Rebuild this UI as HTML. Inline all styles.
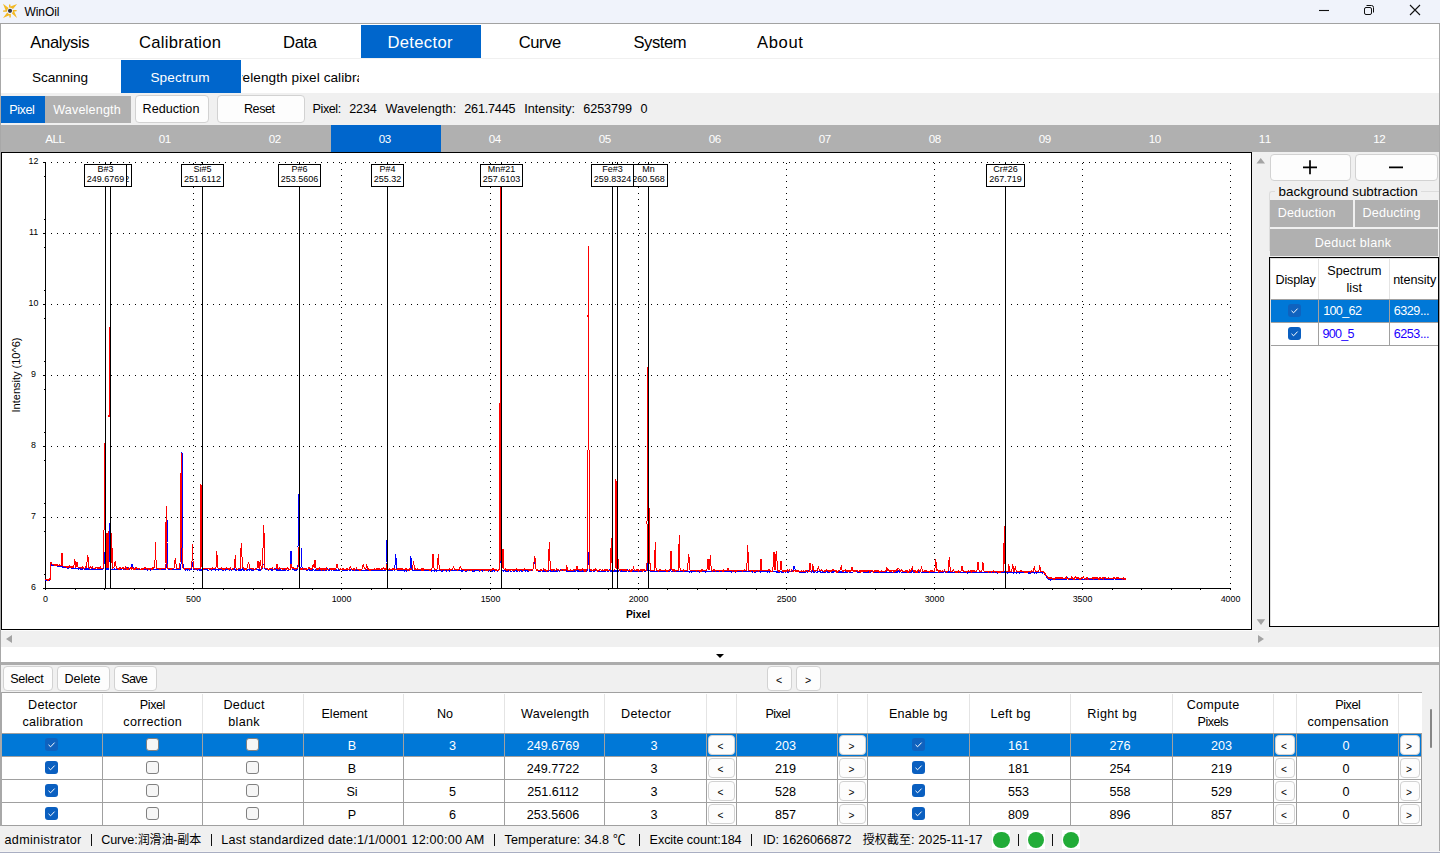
<!DOCTYPE html>
<html lang="en"><head><meta charset="utf-8"><title>WinOil</title>
<style>
*{box-sizing:border-box;margin:0;padding:0}
html,body{width:1440px;height:853px;overflow:hidden;background:#f0f0f0;font-family:"Liberation Sans","Noto Sans CJK SC",sans-serif;font-size:12.6px;color:#000}
.a{position:absolute}
.t{position:absolute;white-space:pre;line-height:16px;height:16px}
.c{position:absolute;display:flex;align-items:center;justify-content:center;white-space:nowrap;text-align:center}
.btn{position:absolute;display:flex;align-items:center;justify-content:center;background:#fdfdfd;border:1px solid #d2d2d2;border-radius:4px;white-space:nowrap}
.m{font-size:16.6px}
.s{font-size:13.6px}
.w{color:#fff}
.chart{position:absolute;left:2px;top:153px}
.ub{position:absolute;width:13px;height:13px;border-radius:3px;background:#f6f6f6;border:1px solid #808080}
.vl{position:absolute;width:1px;background:#a0a0a0}
.hl{position:absolute;height:1px;background:#a0a0a0}
</style></head>
<body>
<div class="a" style="left:0;top:0;width:1440px;height:24px;background:#f0f3fb"></div>
<div class="a" style="left:0;top:23px;width:1440px;height:1px;background:#a2a2a2"></div>
<svg class="a" style="left:0;top:0" width="22" height="22" viewBox="0 0 22 22"><g fill="#f2b824"><path d="M17.1 3.9L13 9L11.3 7.9L9 7.6L9 4.4L10.4 4.4L10.5 6.6Z"/><path d="M17 17.9L11.9 13.6L12.9 11.4L13 10L16.6 10L16.6 11.3L14.2 11.5Z"/><path d="M3 17.9L7.2 12.6L8.8 13.9L10.8 14L10.8 17.4L9.4 17.4L9.3 15.2Z"/><path d="M3 3.8L8.6 8L7.2 10L6.9 11.8L3.1 11.8L3.1 10.4L5.6 10.2Z"/></g><circle cx="10" cy="10.8" r="2.1" fill="#3b3b42"/></svg>
<div class="t " style="left:24.4px;top:3.5px;font-size:12px"><span style="letter-spacing:-0.049px;margin-right:0.049px">WinOil</span></div>
<svg class="a" style="left:1310px;top:0" width="120" height="22" viewBox="1310 0 120 22" fill="none" stroke="#111" stroke-width="1.1"><path d="M1319 10.5H1329"/><rect x="1364.5" y="7.5" width="7" height="7" rx="1.5" stroke-width="1"/><path d="M1366.5 5.5H1371.5a2 2 0 0 1 2 2V12.5" stroke-width="1"/><path d="M1410 5L1420 15M1420 5L1410 15"/></svg>
<div class="a" style="left:1px;top:24px;width:1438px;height:69px;background:#fff"></div>
<div class="a" style="left:1px;top:58px;width:1438px;height:1px;background:#f0f0f0"></div>
<div class="c m" style="left:0px;top:26px;width:120px;height:33px"><span style="letter-spacing:-0.357px;margin-right:0.357px">Analysis</span></div>
<div class="c m" style="left:120px;top:26px;width:120px;height:33px"><span style="letter-spacing:0.267px;margin-right:-0.267px">Calibration</span></div>
<div class="c m" style="left:240px;top:26px;width:120px;height:33px"><span style="letter-spacing:-0.354px;margin-right:0.354px">Data</span></div>
<div class="a" style="left:361px;top:25px;width:120px;height:33px;background:#0066cc"></div>
<div class="c m w" style="left:360px;top:26px;width:120px;height:33px"><span style="letter-spacing:0.326px;margin-right:-0.326px">Detector</span></div>
<div class="c m" style="left:480px;top:26px;width:120px;height:33px"><span style="letter-spacing:-0.441px;margin-right:0.441px">Curve</span></div>
<div class="c m" style="left:600px;top:26px;width:120px;height:33px"><span style="letter-spacing:-0.466px;margin-right:0.466px">System</span></div>
<div class="c m" style="left:720px;top:26px;width:120px;height:33px"><span style="letter-spacing:0.656px;margin-right:-0.656px">About</span></div>
<div class="c s" style="left:0;top:61px;width:120px;height:33px"><span style="letter-spacing:-0.113px;margin-right:0.113px">Scanning</span></div>
<div class="a" style="left:121px;top:60px;width:120px;height:33px;background:#0066cc"></div>
<div class="c s w" style="left:120px;top:61px;width:120px;height:33px"><span style="letter-spacing:0.147px;margin-right:-0.147px">Spectrum</span></div>
<div class="a s" style="left:242px;top:61px;width:117px;height:33px;overflow:hidden"><div class="c s" style="left:-41px;top:0;width:200px;height:33px"><span style="letter-spacing:0.064px;margin-right:-0.064px">Wavelength pixel calibration</span></div></div>
<div class="c w" style="left:1px;top:96px;width:44px;height:27px;background:#0066cc;padding-right:2px"><span style="letter-spacing:-0.449px;margin-right:0.449px">Pixel</span></div>
<div class="c w" style="left:45px;top:96px;width:86px;height:27px;background:#b0b0b0;padding-right:2px"><span style="letter-spacing:0.150px;margin-right:-0.150px">Wavelength</span></div>
<div class="btn" style="left:135px;top:95px;width:74px;height:28px;padding-right:2px"><span style="letter-spacing:0.010px;margin-right:-0.010px">Reduction</span></div>
<div class="btn" style="left:217px;top:95px;width:88px;height:28px;padding-right:3px"><span style="letter-spacing:-0.477px;margin-right:0.477px">Reset</span></div>
<div class="t " style="left:312.5px;top:101.3px;"><span style="letter-spacing:-0.409px;margin-right:0.409px">Pixel:</span></div>
<div class="t " style="left:349.25px;top:101.3px;"><span style="letter-spacing:-0.177px;margin-right:0.177px">2234</span></div>
<div class="t " style="left:385.5px;top:101.3px;"><span style="letter-spacing:0.120px;margin-right:-0.120px">Wavelength:</span></div>
<div class="t " style="left:464.25px;top:101.3px;"><span style="letter-spacing:-0.183px;margin-right:0.183px">261.7445</span></div>
<div class="t " style="left:524.25px;top:101.3px;"><span style="letter-spacing:0.038px;margin-right:-0.038px">Intensity:</span></div>
<div class="t " style="left:583.25px;top:101.3px;"><span style="letter-spacing:-0.047px;margin-right:0.047px">6253799</span></div>
<div class="t " style="left:640.5px;top:101.3px;"><span style="letter-spacing:-0.516px;margin-right:0.516px">0</span></div>
<div class="a" style="left:1px;top:125px;width:1438px;height:27px;background:#b0b0b0"></div>
<div class="c w" style="left:0px;top:125px;width:110px;height:27px;font-size:11.6px"><span style="letter-spacing:-0.470px;margin-right:0.470px">ALL</span></div>
<div class="c w" style="left:110px;top:125px;width:110px;height:27px;font-size:11.6px"><span style="letter-spacing:-0.306px;margin-right:0.306px">01</span></div>
<div class="c w" style="left:220px;top:125px;width:110px;height:27px;font-size:11.6px"><span style="letter-spacing:-0.306px;margin-right:0.306px">02</span></div>
<div class="a" style="left:331px;top:125px;width:110px;height:27px;background:#0066cc"></div>
<div class="c w" style="left:330px;top:125px;width:110px;height:27px;font-size:11.6px"><span style="letter-spacing:-0.306px;margin-right:0.306px">03</span></div>
<div class="c w" style="left:440px;top:125px;width:110px;height:27px;font-size:11.6px"><span style="letter-spacing:-0.306px;margin-right:0.306px">04</span></div>
<div class="c w" style="left:550px;top:125px;width:110px;height:27px;font-size:11.6px"><span style="letter-spacing:-0.306px;margin-right:0.306px">05</span></div>
<div class="c w" style="left:660px;top:125px;width:110px;height:27px;font-size:11.6px"><span style="letter-spacing:-0.306px;margin-right:0.306px">06</span></div>
<div class="c w" style="left:770px;top:125px;width:110px;height:27px;font-size:11.6px"><span style="letter-spacing:-0.306px;margin-right:0.306px">07</span></div>
<div class="c w" style="left:880px;top:125px;width:110px;height:27px;font-size:11.6px"><span style="letter-spacing:-0.306px;margin-right:0.306px">08</span></div>
<div class="c w" style="left:990px;top:125px;width:110px;height:27px;font-size:11.6px"><span style="letter-spacing:-0.306px;margin-right:0.306px">09</span></div>
<div class="c w" style="left:1100px;top:125px;width:110px;height:27px;font-size:11.6px"><span style="letter-spacing:-0.306px;margin-right:0.306px">10</span></div>
<div class="c w" style="left:1210px;top:125px;width:110px;height:27px;font-size:11.6px"><span style="letter-spacing:0.553px;margin-right:-0.553px">11</span></div>
<div class="c w" style="left:1321px;top:125px;width:117px;height:27px;font-size:11.6px"><span style="letter-spacing:-0.306px;margin-right:0.306px">12</span></div>
<div class="a" style="left:1px;top:152px;width:1251px;height:478px;background:#fff;border:1px solid #000"></div>
<svg class="chart" width="1248" height="476" viewBox="2 153 1248 476" shape-rendering="crispEdges" font-family="'Liberation Sans', Arial, sans-serif" font-size="8.9" fill="#000">
<line x1="51" y1="517.5" x2="1231" y2="517.5" stroke="#000" stroke-dasharray="1 5"/>
<line x1="51" y1="446.5" x2="1231" y2="446.5" stroke="#000" stroke-dasharray="1 5"/>
<line x1="51" y1="375.5" x2="1231" y2="375.5" stroke="#000" stroke-dasharray="1 5"/>
<line x1="51" y1="304.5" x2="1231" y2="304.5" stroke="#000" stroke-dasharray="1 5"/>
<line x1="51" y1="233.5" x2="1231" y2="233.5" stroke="#000" stroke-dasharray="1 5"/>
<line x1="51" y1="162.5" x2="1231" y2="162.5" stroke="#000" stroke-dasharray="1 5"/>
<line x1="193.5" y1="163" x2="193.5" y2="587" stroke="#000" stroke-dasharray="1 5"/>
<line x1="341.5" y1="163" x2="341.5" y2="587" stroke="#000" stroke-dasharray="1 5"/>
<line x1="490.5" y1="163" x2="490.5" y2="587" stroke="#000" stroke-dasharray="1 5"/>
<line x1="638.5" y1="163" x2="638.5" y2="587" stroke="#000" stroke-dasharray="1 5"/>
<line x1="786.5" y1="163" x2="786.5" y2="587" stroke="#000" stroke-dasharray="1 5"/>
<line x1="934.5" y1="163" x2="934.5" y2="587" stroke="#000" stroke-dasharray="1 5"/>
<line x1="1082.5" y1="163" x2="1082.5" y2="587" stroke="#000" stroke-dasharray="1 5"/>
<line x1="1230.5" y1="163" x2="1230.5" y2="587" stroke="#000" stroke-dasharray="1 5"/>
<line x1="45.5" y1="162" x2="45.5" y2="589" stroke="#000"/>
<line x1="45" y1="588.5" x2="1231" y2="588.5" stroke="#000"/>
<line x1="43" y1="588.5" x2="46" y2="588.5" stroke="#000"/>
<line x1="44" y1="574.5" x2="46" y2="574.5" stroke="#000"/>
<line x1="44" y1="531.5" x2="46" y2="531.5" stroke="#000"/>
<text x="33.5" y="589.5" text-anchor="middle">6</text>
<line x1="43" y1="517.5" x2="46" y2="517.5" stroke="#000"/>
<line x1="44" y1="503.5" x2="46" y2="503.5" stroke="#000"/>
<line x1="44" y1="460.5" x2="46" y2="460.5" stroke="#000"/>
<text x="33.5" y="518.5" text-anchor="middle">7</text>
<line x1="43" y1="446.5" x2="46" y2="446.5" stroke="#000"/>
<line x1="44" y1="432.5" x2="46" y2="432.5" stroke="#000"/>
<line x1="44" y1="389.5" x2="46" y2="389.5" stroke="#000"/>
<text x="33.5" y="447.5" text-anchor="middle">8</text>
<line x1="43" y1="375.5" x2="46" y2="375.5" stroke="#000"/>
<line x1="44" y1="361.5" x2="46" y2="361.5" stroke="#000"/>
<line x1="44" y1="318.5" x2="46" y2="318.5" stroke="#000"/>
<text x="33.5" y="376.5" text-anchor="middle">9</text>
<line x1="43" y1="304.5" x2="46" y2="304.5" stroke="#000"/>
<line x1="44" y1="290.5" x2="46" y2="290.5" stroke="#000"/>
<line x1="44" y1="247.5" x2="46" y2="247.5" stroke="#000"/>
<text x="33.5" y="305.5" text-anchor="middle">10</text>
<line x1="43" y1="233.5" x2="46" y2="233.5" stroke="#000"/>
<line x1="44" y1="219.5" x2="46" y2="219.5" stroke="#000"/>
<line x1="44" y1="176.5" x2="46" y2="176.5" stroke="#000"/>
<text x="33.5" y="234.5" text-anchor="middle">11</text>
<line x1="43" y1="162.5" x2="46" y2="162.5" stroke="#000"/>
<text x="33.5" y="163.5" text-anchor="middle">12</text>
<line x1="45.5" y1="588" x2="45.5" y2="590" stroke="#000"/>
<text x="45.5" y="602" text-anchor="middle">0</text>
<line x1="75.5" y1="588" x2="75.5" y2="590" stroke="#000"/>
<line x1="104.5" y1="588" x2="104.5" y2="590" stroke="#000"/>
<line x1="134.5" y1="588" x2="134.5" y2="590" stroke="#000"/>
<line x1="164.5" y1="588" x2="164.5" y2="590" stroke="#000"/>
<line x1="193.5" y1="588" x2="193.5" y2="590" stroke="#000"/>
<text x="193.5" y="602" text-anchor="middle">500</text>
<line x1="223.5" y1="588" x2="223.5" y2="590" stroke="#000"/>
<line x1="253.5" y1="588" x2="253.5" y2="590" stroke="#000"/>
<line x1="282.5" y1="588" x2="282.5" y2="590" stroke="#000"/>
<line x1="312.5" y1="588" x2="312.5" y2="590" stroke="#000"/>
<line x1="341.5" y1="588" x2="341.5" y2="590" stroke="#000"/>
<text x="341.5" y="602" text-anchor="middle">1000</text>
<line x1="371.5" y1="588" x2="371.5" y2="590" stroke="#000"/>
<line x1="401.5" y1="588" x2="401.5" y2="590" stroke="#000"/>
<line x1="430.5" y1="588" x2="430.5" y2="590" stroke="#000"/>
<line x1="460.5" y1="588" x2="460.5" y2="590" stroke="#000"/>
<line x1="490.5" y1="588" x2="490.5" y2="590" stroke="#000"/>
<text x="490.5" y="602" text-anchor="middle">1500</text>
<line x1="519.5" y1="588" x2="519.5" y2="590" stroke="#000"/>
<line x1="549.5" y1="588" x2="549.5" y2="590" stroke="#000"/>
<line x1="578.5" y1="588" x2="578.5" y2="590" stroke="#000"/>
<line x1="608.5" y1="588" x2="608.5" y2="590" stroke="#000"/>
<line x1="638.5" y1="588" x2="638.5" y2="590" stroke="#000"/>
<text x="638.5" y="602" text-anchor="middle">2000</text>
<line x1="667.5" y1="588" x2="667.5" y2="590" stroke="#000"/>
<line x1="697.5" y1="588" x2="697.5" y2="590" stroke="#000"/>
<line x1="726.5" y1="588" x2="726.5" y2="590" stroke="#000"/>
<line x1="756.5" y1="588" x2="756.5" y2="590" stroke="#000"/>
<line x1="786.5" y1="588" x2="786.5" y2="590" stroke="#000"/>
<text x="786.5" y="602" text-anchor="middle">2500</text>
<line x1="815.5" y1="588" x2="815.5" y2="590" stroke="#000"/>
<line x1="845.5" y1="588" x2="845.5" y2="590" stroke="#000"/>
<line x1="875.5" y1="588" x2="875.5" y2="590" stroke="#000"/>
<line x1="904.5" y1="588" x2="904.5" y2="590" stroke="#000"/>
<line x1="934.5" y1="588" x2="934.5" y2="590" stroke="#000"/>
<text x="934.5" y="602" text-anchor="middle">3000</text>
<line x1="963.5" y1="588" x2="963.5" y2="590" stroke="#000"/>
<line x1="993.5" y1="588" x2="993.5" y2="590" stroke="#000"/>
<line x1="1023.5" y1="588" x2="1023.5" y2="590" stroke="#000"/>
<line x1="1052.5" y1="588" x2="1052.5" y2="590" stroke="#000"/>
<line x1="1082.5" y1="588" x2="1082.5" y2="590" stroke="#000"/>
<text x="1082.5" y="602" text-anchor="middle">3500</text>
<line x1="1112.5" y1="588" x2="1112.5" y2="590" stroke="#000"/>
<line x1="1141.5" y1="588" x2="1141.5" y2="590" stroke="#000"/>
<line x1="1171.5" y1="588" x2="1171.5" y2="590" stroke="#000"/>
<line x1="1200.5" y1="588" x2="1200.5" y2="590" stroke="#000"/>
<line x1="1230.5" y1="588" x2="1230.5" y2="590" stroke="#000"/>
<text x="1230.5" y="602" text-anchor="middle">4000</text>
<path d="M45,580 L45.5,580 L46,581 L46.5,580 L47,580 L47.5,580 L48,580 L48.5,580 L49,580 L49.5,580 L49.5,579 L50,580 L50,564 L50.5,564 L51,564 L51,565 L51.5,565 L51.5,564 L52,565 L52.5,565 L52.5,564 L53,565 L53.5,565 L54,565 L54.5,566 L54.5,565 L55,565 L55.5,565 L55.5,566 L56,565 L56.5,565 L57,565 L57.5,566 L58,565 L58,566 L58.5,566 L59,566 L59.5,566 L60,566 L60.5,566 L60.5,567 L61,566 L61,567 L61.5,566 L62,566 L62,567 L62.5,567 L62.5,566 L63,567 L63.5,567 L64,567 L64.5,567 L65,567 L65.5,567 L66,567 L66.5,567 L67,567 L67.5,567 L67.5,568 L68,568 L68.5,568 L68.5,567 L69,567 L69,568 L69.5,567 L70,567 L70.5,568 L70.5,567 L71,568 L71.5,568 L72,568 L72,567 L72.5,568 L73,568 L73.5,568 L74,568 L74.5,568 L75,569 L75,568 L75.5,568 L76,569 L76.5,568 L76.5,569 L77,568 L77,569 L77.5,568 L78,568 L78,569 L78.5,569 L78.5,568 L79,568 L79.5,569 L79.5,568 L80,569 L80.5,569 L80.5,568 L81,568 L81.5,569 L82,569 L82,568 L82.5,568 L83,568 L83.5,568 L84,568 L84.5,569 L85,568 L85,569 L85.5,569 L86,569 L86,568 L86.5,569 L86.5,568 L87,569 L87.5,569 L88,568 L88,569 L88.5,568 L88.5,569 L89,569 L89.5,569 L90,569 L90.5,569 L91,569 L91.5,569 L91.5,568 L92,568 L92.5,568 L92.5,569 L93,569 L93.5,569 L94,569 L94,568 L94.5,568 L94.5,569 L95,569 L95.5,569 L96,569 L96.5,569 L97,569 L97.5,569 L98,569 L98.5,569 L99,569 L99.5,569 L100,568 L100.5,568 L100.5,569 L101,569 L101.5,569 L102,569 L102.5,569 L103,569 L103.5,568 L104,564 L104,556 L104.5,552 L104.5,556 L105,564 L105.5,568 L105.5,569 L106,569 L106.5,569 L107,568 L107,569 L107.5,569 L108,569 L108.5,569 L108.5,568 L109,562 L109,540 L109.5,523 L110,540 L110,562 L110.5,568 L110.5,569 L111,569 L111.5,569 L112,569 L112.5,569 L113,569 L113.5,569 L114,569 L114,568 L114.5,569 L115,569 L115.5,569 L116,569 L116.5,569 L117,569 L117.5,569 L118,569 L118,568 L118.5,569 L118.5,568 L119,569 L119.5,569 L120,569 L120.5,569 L121,569 L121.5,569 L122,569 L122.5,568 L123,569 L123.5,569 L124,569 L124.5,568 L124.5,569 L125,569 L125.5,569 L126,569 L126.5,569 L127,569 L127.5,568 L128,569 L128.5,569 L129,569 L129.5,569 L130,569 L130.5,568 L131,568 L131,567 L131.5,566 L131.5,564 L132,564 L132.5,564 L132.5,566 L133,567 L133,568 L133.5,569 L134,569 L134.5,569 L135,569 L135.5,569 L136,569 L136.5,569 L137,569 L137.5,569 L138,569 L138.5,569 L139,570 L139,569 L139.5,569 L140,569 L140.5,569 L140.5,570 L141,569 L141.5,569 L142,569 L142.5,570 L142.5,569 L143,569 L143.5,569 L144,569 L144.5,569 L145,569 L145.5,569 L146,569 L146.5,569 L147,569 L147,570 L147.5,570 L147.5,569 L148,569 L148.5,569 L149,569 L149.5,569 L150,569 L150.5,570 L151,569 L151.5,569 L152,569 L152.5,569 L153,569 L153.5,570 L153.5,569 L154,569 L154.5,569 L155,570 L155,569 L155.5,569 L156,569 L156.5,569 L157,569 L157.5,569 L158,569 L158.5,569 L158.5,570 L159,569 L159.5,569 L160,569 L160.5,569 L161,570 L161.5,569 L162,569 L162.5,569 L163,569 L163.5,569 L164,569 L164.5,569 L165,569 L165.5,569 L166,568 L166,561 L166.5,542 L166.5,520 L167,520 L167,542 L167.5,561 L168,568 L168,569 L168.5,569 L169,569 L169.5,569 L169.5,570 L170,569 L170,570 L170.5,569 L171,569 L171.5,569 L172,569 L172.5,569 L173,569 L173.5,569 L174,569 L174.5,569 L175,569 L175.5,569 L176,569 L176.5,569 L177,569 L177.5,569 L178,569 L178,570 L178.5,569 L179,569 L179.5,569 L180,569 L180.5,569 L180.5,568 L181,564 L181,548 L181.5,515 L181.5,473 L182,452 L182.5,473 L182.5,515 L183,548 L183,564 L183.5,568 L184,569 L184.5,569 L185,569 L185.5,570 L186,570 L186.5,569 L187,570 L187,569 L187.5,570 L188,569 L188.5,569 L189,569 L189,570 L189.5,570 L189.5,569 L190,569 L190.5,569 L191,569 L191.5,569 L192,567 L192,564 L192.5,562 L192.5,564 L193,567 L193.5,569 L194,569 L194.5,569 L195,569 L195.5,569 L196,569 L196.5,569 L197,569 L197,570 L197.5,570 L197.5,569 L198,570 L198.5,569 L199,569 L199,570 L199.5,570 L200,569 L200,570 L200.5,570 L200.5,569 L201,570 L201.5,570 L201.5,569 L202,570 L202,569 L202.5,569 L203,570 L203,569 L203.5,570 L203.5,569 L204,569 L204.5,570 L204.5,569 L205,570 L205.5,569 L206,569 L206.5,569 L207,570 L207,569 L207.5,570 L208,570 L208.5,570 L209,570 L209.5,569 L210,569 L210.5,569 L211,569 L211.5,570 L212,569 L212.5,569 L212.5,570 L213,569 L213,570 L213.5,569 L214,569 L214.5,569 L215,569 L215.5,570 L216,569 L216.5,570 L216.5,569 L217,569 L217.5,569 L217.5,570 L218,569 L218,570 L218.5,570 L219,569 L219.5,569 L220,569 L220.5,569 L220.5,570 L221,569 L221.5,569 L222,570 L222.5,570 L223,569 L223.5,570 L224,569 L224.5,569 L225,570 L225.5,570 L225.5,569 L226,569 L226,570 L226.5,569 L227,569 L227.5,569 L228,569 L228.5,569 L228.5,570 L229,569 L229,570 L229.5,569 L229.5,570 L230,570 L230.5,569 L230.5,570 L231,569 L231.5,570 L232,569 L232.5,569 L233,569 L233.5,570 L233.5,569 L234,570 L234.5,569 L235,570 L235,569 L235.5,569 L235.5,570 L236,570 L236,569 L236.5,569 L237,570 L237,569 L237.5,569 L238,569 L238.5,570 L239,569 L239,570 L239.5,570 L240,569 L240,570 L240.5,570 L241,570 L241.5,569 L241.5,570 L242,570 L242.5,569 L243,570 L243,569 L243.5,570 L244,569 L244,570 L244.5,570 L245,569 L245.5,569 L246,569 L246.5,569 L246.5,570 L247,570 L247,569 L247.5,569 L248,570 L248,569 L248.5,569 L249,569 L249.5,569 L249.5,570 L250,570 L250.5,569 L251,570 L251,569 L251.5,570 L252,569 L252,570 L252.5,570 L253,570 L253.5,570 L253.5,569 L254,569 L254.5,570 L254.5,569 L255,569 L255,570 L255.5,569 L256,570 L256,569 L256.5,570 L256.5,569 L257,569 L257.5,569 L258,569 L258.5,570 L259,570 L259,569 L259.5,570 L260,570 L260,569 L260.5,569 L261,569 L261.5,569 L262,569 L262.5,568 L262.5,567 L263,565 L263,564 L263.5,564 L264,564 L264,565 L264.5,567 L264.5,568 L265,569 L265.5,569 L266,569 L266,570 L266.5,569 L267,569 L267.5,569 L267.5,570 L268,569 L268,570 L268.5,570 L269,569 L269,570 L269.5,569 L270,569 L270.5,569 L270.5,570 L271,569 L271.5,570 L272,570 L272,569 L272.5,570 L273,569 L273.5,569 L274,569 L274,570 L274.5,569 L275,570 L275.5,569 L276,570 L276,569 L276.5,570 L277,569 L277,570 L277.5,570 L278,570 L278.5,570 L279,570 L279,569 L279.5,570 L280,570 L280.5,570 L280.5,569 L281,570 L281.5,570 L282,570 L282,569 L282.5,570 L283,570 L283.5,570 L283.5,569 L284,569 L284.5,570 L285,569 L285,570 L285.5,570 L286,569 L286.5,569 L287,570 L287.5,570 L288,570 L288.5,570 L289,569 L289.5,569 L290,569 L290,568 L290.5,564 L290.5,556 L291,551 L291.5,556 L291.5,564 L292,568 L292,569 L292.5,569 L293,570 L293,569 L293.5,570 L293.5,569 L294,570 L294.5,570 L295,569 L295.5,570 L296,570 L296,569 L296.5,569 L297,569 L297.5,570 L297.5,569 L298,565 L298,547 L298.5,513 L298.5,494 L299,513 L299.5,547 L299.5,565 L300,569 L300,570 L300.5,569 L301,567 L301,557 L301.5,548 L301.5,557 L302,567 L302.5,569 L303,569 L303,570 L303.5,569 L304,570 L304.5,569 L305,569 L305.5,569 L306,570 L306.5,570 L307,569 L307.5,570 L308,569 L308,570 L308.5,569 L309,570 L309.5,570 L310,569 L310.5,570 L311,570 L311.5,570 L312,569 L312,570 L312.5,570 L313,569 L313.5,569 L314,570 L314.5,570 L315,570 L315.5,570 L315.5,569 L316,570 L316,569 L316.5,570 L317,570 L317.5,570 L318,569 L318.5,569 L318.5,570 L319,570 L319,569 L319.5,569 L320,570 L320.5,570 L320.5,569 L321,570 L321.5,570 L322,570 L322.5,570 L323,570 L323.5,570 L323.5,569 L324,569 L324,570 L324.5,569 L325,570 L325.5,570 L326,570 L326.5,569 L326.5,570 L327,570 L327.5,569 L328,570 L328,569 L328.5,570 L329,570 L329.5,570 L329.5,569 L330,570 L330,569 L330.5,569 L330.5,570 L331,569 L331.5,570 L332,570 L332.5,569 L333,570 L333,569 L333.5,570 L334,569 L334.5,570 L335,570 L335.5,570 L336,570 L336.5,570 L336.5,569 L337,570 L337.5,570 L338,570 L338,569 L338.5,570 L338.5,569 L339,570 L339.5,569 L339.5,570 L340,570 L340.5,569 L341,570 L341,569 L341.5,569 L342,570 L342.5,570 L342.5,569 L343,570 L343.5,570 L344,570 L344.5,570 L345,569 L345.5,570 L346,570 L346,569 L346.5,570 L347,570 L347.5,570 L348,569 L348,570 L348.5,569 L349,569 L349,570 L349.5,569 L349.5,570 L350,570 L350.5,570 L350.5,569 L351,570 L351.5,569 L352,570 L352.5,570 L353,570 L353.5,570 L354,570 L354.5,569 L354.5,570 L355,569 L355.5,570 L356,570 L356,569 L356.5,570 L357,570 L357.5,570 L358,570 L358.5,570 L359,570 L359,569 L359.5,570 L360,569 L360,570 L360.5,570 L361,570 L361.5,570 L362,570 L362.5,570 L363,570 L363.5,570 L364,570 L364.5,570 L365,570 L365.5,570 L366,570 L366.5,570 L366.5,569 L367,569 L367,570 L367.5,570 L368,570 L368.5,570 L369,570 L369.5,570 L370,570 L370.5,570 L371,570 L371.5,570 L372,570 L372.5,570 L373,570 L373.5,570 L374,570 L374.5,570 L375,570 L375,569 L375.5,570 L376,570 L376.5,570 L377,570 L377.5,570 L378,570 L378,569 L378.5,569 L378.5,570 L379,570 L379.5,570 L380,570 L380.5,570 L381,570 L381.5,570 L381.5,569 L382,570 L382.5,569 L382.5,570 L383,570 L383.5,570 L384,570 L384.5,570 L385,570 L385.5,570 L386,569 L386,563 L386.5,549 L386.5,540 L387,549 L387.5,563 L387.5,569 L388,570 L388.5,570 L389,569 L389,570 L389.5,570 L390,570 L390.5,570 L391,571 L391,570 L391.5,570 L392,570 L392.5,570 L393,570 L393.5,569 L394,570 L394.5,570 L394.5,569 L395,565 L395.5,558 L395.5,554 L396,558 L396,565 L396.5,569 L397,570 L397.5,570 L398,570 L398.5,570 L399,570 L399.5,570 L400,570 L400.5,570 L400.5,569 L401,570 L401,571 L401.5,570 L402,569 L402,570 L402.5,570 L403,570 L403.5,570 L404,570 L404.5,571 L405,570 L405.5,570 L406,570 L406.5,571 L407,570 L407,571 L407.5,570 L408,570 L408.5,570 L409,570 L409.5,569 L410,568 L410,563 L410.5,558 L410.5,556 L411,558 L411.5,563 L411.5,568 L412,569 L412,570 L412.5,570 L413,570 L413.5,570 L414,571 L414.5,570 L415,570 L415.5,570 L416,570 L416.5,570 L417,570 L417,571 L417.5,570 L418,570 L418.5,570 L418.5,571 L419,570 L419.5,570 L420,570 L420.5,570 L421,570 L421,571 L421.5,570 L421.5,571 L422,570 L422.5,570 L423,570 L423.5,570 L424,570 L424.5,570 L424.5,571 L425,570 L425.5,570 L426,570 L426,571 L426.5,570 L427,570 L427.5,571 L427.5,570 L428,570 L428.5,570 L429,570 L429.5,570 L429.5,571 L430,570 L430.5,570 L431,571 L431,570 L431.5,571 L432,570 L432.5,570 L433,570 L433.5,570 L434,571 L434.5,571 L434.5,570 L435,570 L435.5,570 L436,570 L436.5,571 L437,570 L437.5,570 L437.5,571 L438,570 L438.5,570 L439,570 L439.5,570 L440,570 L440.5,570 L440.5,571 L441,570 L441,571 L441.5,571 L442,571 L442,570 L442.5,570 L443,570 L443.5,570 L444,570 L444.5,570 L445,571 L445,570 L445.5,570 L446,570 L446.5,571 L447,570 L447.5,570 L448,570 L448.5,570 L449,570 L449.5,571 L450,570 L450.5,570 L451,570 L451.5,570 L452,570 L452.5,570 L453,570 L453.5,570 L454,570 L454.5,570 L454.5,571 L455,570 L455.5,570 L455.5,571 L456,570 L456.5,570 L457,570 L457.5,570 L458,570 L458,571 L458.5,570 L459,570 L459.5,570 L460,570 L460.5,570 L461,570 L461,571 L461.5,570 L461.5,571 L462,571 L462,570 L462.5,570 L463,571 L463,570 L463.5,571 L463.5,570 L464,570 L464.5,571 L464.5,570 L465,570 L465.5,571 L466,570 L466,571 L466.5,571 L467,570 L467.5,570 L467.5,571 L468,570 L468.5,570 L469,570 L469.5,571 L469.5,570 L470,570 L470.5,570 L471,570 L471,571 L471.5,570 L472,571 L472.5,571 L472.5,570 L473,571 L473,570 L473.5,571 L474,571 L474,570 L474.5,570 L475,570 L475.5,570 L476,570 L476.5,570 L477,571 L477.5,570 L478,570 L478,571 L478.5,570 L479,571 L479,570 L479.5,571 L480,570 L480.5,570 L481,570 L481.5,570 L482,571 L482,570 L482.5,571 L483,570 L483.5,570 L484,570 L484.5,570 L485,571 L485.5,570 L486,570 L486.5,570 L487,570 L487.5,570 L487.5,571 L488,570 L488.5,570 L488.5,571 L489,571 L489.5,570 L490,571 L490,570 L490.5,571 L490.5,570 L491,571 L491.5,570 L491.5,571 L492,571 L492,570 L492.5,571 L493,570 L493.5,571 L493.5,570 L494,570 L494.5,571 L495,570 L495.5,570 L496,570 L496.5,570 L497,570 L497.5,571 L498,570 L498.5,570 L499,570 L499.5,569 L499.5,563 L500,551 L500,544 L500.5,551 L501,563 L501,569 L501.5,570 L502,570 L502.5,570 L503,571 L503,570 L503.5,571 L504,570 L504.5,570 L505,570 L505,571 L505.5,571 L506,570 L506.5,571 L507,571 L507.5,571 L507.5,570 L508,571 L508.5,571 L509,570 L509.5,570 L510,570 L510.5,571 L511,571 L511.5,571 L512,571 L512.5,570 L513,570 L513,571 L513.5,571 L514,571 L514,570 L514.5,571 L514.5,570 L515,570 L515.5,571 L515.5,570 L516,570 L516.5,571 L517,571 L517,570 L517.5,570 L517.5,571 L518,570 L518.5,570 L519,571 L519.5,571 L520,571 L520.5,570 L521,571 L521.5,571 L522,570 L522,571 L522.5,570 L522.5,571 L523,571 L523.5,570 L523.5,571 L524,570 L524.5,571 L524.5,570 L525,570 L525.5,571 L526,570 L526.5,570 L527,570 L527,571 L527.5,570 L527.5,571 L528,571 L528.5,571 L528.5,570 L529,571 L529,570 L529.5,570 L530,570 L530.5,570 L531,570 L531.5,570 L532,570 L532.5,570 L533,569 L533.5,568 L533.5,566 L534,564 L534,563 L534.5,562 L535,563 L535,564 L535.5,566 L535.5,568 L536,569 L536.5,570 L537,570 L537.5,570 L538,570 L538,571 L538.5,570 L538.5,571 L539,571 L539.5,570 L539.5,571 L540,571 L540,570 L540.5,570 L541,571 L541.5,570 L542,570 L542.5,571 L543,570 L543,571 L543.5,570 L543.5,571 L544,571 L544.5,570 L544.5,571 L545,571 L545.5,571 L546,571 L546.5,570 L546.5,571 L547,571 L547.5,571 L547.5,570 L548,570 L548.5,571 L549,570 L549.5,571 L549.5,570 L550,571 L550,570 L550.5,571 L551,571 L551.5,570 L551.5,571 L552,571 L552.5,570 L552.5,571 L553,571 L553.5,571 L554,570 L554,571 L554.5,571 L555,571 L555.5,571 L556,571 L556,570 L556.5,570 L557,571 L557.5,570 L557.5,571 L558,571 L558.5,570 L559,570 L559,571 L559.5,571 L560,571 L560.5,570 L561,571 L561.5,570 L562,570 L562.5,570 L563,571 L563.5,570 L564,570 L564.5,570 L565,571 L565.5,570 L565.5,571 L566,570 L566.5,571 L567,571 L567,570 L567.5,571 L568,571 L568.5,571 L569,570 L569,571 L569.5,571 L570,570 L570,571 L570.5,571 L571,570 L571.5,571 L572,571 L572.5,570 L572.5,571 L573,571 L573.5,571 L574,570 L574.5,571 L575,571 L575.5,570 L575.5,571 L576,571 L576.5,570 L576.5,571 L577,570 L577,571 L577.5,571 L578,571 L578,570 L578.5,571 L579,570 L579,571 L579.5,571 L580,571 L580.5,570 L580.5,571 L581,571 L581.5,571 L582,571 L582,570 L582.5,570 L583,571 L583.5,571 L584,570 L584.5,571 L585,571 L585.5,571 L586,571 L586,570 L586.5,570 L586.5,571 L587,571 L587.5,569 L588,565 L588,557 L588.5,552 L588.5,557 L589,565 L589.5,569 L589.5,571 L590,571 L590.5,571 L591,571 L591.5,571 L592,571 L592.5,570 L592.5,571 L593,570 L593,571 L593.5,571 L594,571 L594.5,571 L595,571 L595.5,570 L596,571 L596,570 L596.5,571 L596.5,570 L597,571 L597.5,570 L597.5,571 L598,570 L598,571 L598.5,571 L599,570 L599,571 L599.5,570 L599.5,571 L600,571 L600.5,571 L601,571 L601.5,571 L602,570 L602,571 L602.5,571 L603,571 L603.5,571 L604,571 L604.5,571 L605,571 L605.5,571 L605.5,570 L606,571 L606.5,570 L607,571 L607,570 L607.5,571 L608,571 L608.5,571 L609,570 L609,571 L609.5,570 L610,571 L610.5,571 L610.5,570 L611,571 L611.5,571 L612,570 L612.5,571 L613,571 L613.5,571 L614,571 L614.5,571 L615,570 L615,571 L615.5,571 L615.5,570 L616,570 L616.5,571 L617,571 L617,570 L617.5,570 L618,571 L618,570 L618.5,571 L619,570 L619,571 L619.5,570 L620,571 L620.5,571 L621,571 L621.5,571 L621.5,570 L622,571 L622.5,571 L623,571 L623.5,570 L623.5,571 L624,571 L624.5,571 L625,571 L625.5,571 L626,571 L626.5,571 L627,571 L627.5,570 L628,571 L628.5,571 L629,571 L629.5,571 L630,571 L630.5,571 L631,571 L631,570 L631.5,571 L632,571 L632.5,571 L633,571 L633,570 L633.5,571 L634,571 L634.5,571 L635,571 L635,570 L635.5,571 L636,571 L636.5,571 L637,571 L637.5,570 L637.5,571 L638,571 L638,570 L638.5,571 L639,570 L639,571 L639.5,570 L639.5,571 L640,571 L640.5,571 L640.5,570 L641,571 L641,570 L641.5,571 L642,571 L642.5,571 L643,571 L643.5,570 L644,571 L644.5,571 L645,571 L645.5,571 L646,570 L646,571 L646.5,570 L647,570 L647,565 L647.5,557 L647.5,552 L648,557 L648.5,565 L648.5,570 L649,571 L649,570 L649.5,571 L649.5,570 L650,571 L650.5,571 L651,571 L651.5,571 L652,571 L652.5,571 L653,571 L653.5,571 L653.5,570 L654,571 L654,570 L654.5,571 L655,571 L655.5,571 L656,571 L656.5,571 L657,571 L657.5,571 L658,571 L658.5,571 L659,571 L659.5,571 L660,571 L660.5,571 L661,571 L661.5,571 L662,571 L662.5,571 L663,571 L663.5,571 L664,571 L664.5,571 L665,571 L665.5,571 L665.5,572 L666,571 L666.5,571 L667,570 L667,571 L667.5,571 L668,571 L668.5,571 L669,571 L669.5,571 L670,571 L670.5,570 L671,571 L671.5,571 L672,571 L672.5,571 L672.5,570 L673,571 L673.5,571 L673.5,570 L674,570 L674.5,571 L675,571 L675.5,571 L676,571 L676.5,571 L677,571 L677.5,571 L678,571 L678.5,571 L679,571 L679.5,571 L680,571 L680.5,571 L681,571 L681,572 L681.5,571 L682,571 L682.5,570 L682.5,571 L683,571 L683.5,571 L684,571 L684.5,571 L684.5,570 L685,571 L685.5,571 L686,571 L686.5,571 L687,571 L687.5,571 L687.5,572 L688,571 L688.5,571 L688.5,572 L689,571 L689.5,571 L689.5,572 L690,572 L690.5,571 L691,572 L691,571 L691.5,572 L692,571 L692.5,571 L693,571 L693.5,571 L694,572 L694,571 L694.5,571 L695,571 L695.5,571 L696,571 L696.5,571 L697,571 L697.5,571 L698,571 L698.5,571 L698.5,572 L699,571 L699,572 L699.5,572 L700,571 L700.5,571 L701,571 L701.5,572 L701.5,571 L702,572 L702,571 L702.5,571 L703,571 L703.5,571 L703.5,572 L704,571 L704.5,571 L705,571 L705.5,571 L705.5,572 L706,572 L706.5,571 L707,572 L707,571 L707.5,571 L708,571 L708.5,571 L709,572 L709.5,571 L710,571 L710.5,571 L711,571 L711,572 L711.5,571 L712,571 L712,572 L712.5,571 L713,571 L713.5,571 L713.5,572 L714,571 L714.5,571 L715,571 L715.5,571 L716,572 L716,571 L716.5,571 L717,572 L717.5,571 L718,571 L718.5,571 L719,571 L719.5,571 L720,571 L720.5,571 L721,571 L721.5,571 L722,571 L722.5,571 L723,571 L723.5,571 L724,572 L724,571 L724.5,571 L725,572 L725.5,571 L726,571 L726.5,571 L727,571 L727.5,571 L728,571 L728.5,571 L729,571 L729.5,571 L730,571 L730.5,571 L731,571 L731.5,572 L732,571 L732.5,571 L733,571 L733.5,572 L733.5,571 L734,571 L734,572 L734.5,571 L735,571 L735,572 L735.5,572 L735.5,571 L736,571 L736.5,571 L737,571 L737,572 L737.5,571 L738,572 L738.5,571 L738.5,572 L739,571 L739.5,571 L740,571 L740,572 L740.5,571 L740.5,572 L741,571 L741.5,571 L742,571 L742.5,571 L743,571 L743.5,572 L743.5,571 L744,571 L744,572 L744.5,571 L745,572 L745,571 L745.5,572 L745.5,571 L746,571 L746.5,571 L747,571 L747.5,571 L748,571 L748.5,571 L749,571 L749.5,571 L750,571 L750.5,571 L750.5,572 L751,571 L751.5,571 L752,572 L752,571 L752.5,572 L753,571 L753.5,571 L754,572 L754.5,572 L755,571 L755,572 L755.5,572 L756,571 L756.5,571 L757,571 L757.5,571 L757.5,572 L758,571 L758,572 L758.5,571 L759,571 L759.5,572 L759.5,571 L760,571 L760.5,572 L761,571 L761.5,571 L762,571 L762.5,571 L763,572 L763,571 L763.5,571 L764,571 L764.5,571 L765,571 L765.5,572 L765.5,571 L766,571 L766,572 L766.5,571 L767,571 L767.5,572 L768,571 L768.5,571 L769,572 L769.5,572 L769.5,571 L770,572 L770.5,571 L770.5,572 L771,571 L771,572 L771.5,571 L772,571 L772.5,572 L772.5,571 L773,572 L773.5,571 L774,571 L774,572 L774.5,571 L775,571 L775.5,571 L776,571 L776,572 L776.5,572 L777,572 L777,571 L777.5,572 L777.5,571 L778,572 L778.5,572 L779,571 L779,572 L779.5,572 L780,571 L780,572 L780.5,571 L781,571 L781.5,571 L781.5,572 L782,572 L782,571 L782.5,572 L783,571 L783.5,571 L783.5,572 L784,572 L784.5,571 L785,571 L785.5,571 L785.5,572 L786,572 L786.5,571 L787,571 L787.5,572 L788,571 L788,572 L788.5,572 L788.5,571 L789,572 L789.5,571 L790,571 L790.5,571 L791,571 L791.5,571 L792,571 L792.5,571 L793,570 L793,569 L793.5,567 L793.5,566 L794,566 L794.5,566 L794.5,567 L795,569 L795,570 L795.5,571 L796,571 L796.5,571 L797,571 L797.5,571 L798,571 L798.5,571 L799,571 L799.5,571 L799.5,572 L800,572 L800,571 L800.5,572 L801,571 L801.5,571 L801.5,572 L802,572 L802.5,572 L803,572 L803,571 L803.5,572 L804,571 L804,572 L804.5,572 L805,571 L805.5,572 L806,571 L806,572 L806.5,571 L807,571 L807.5,571 L807.5,572 L808,572 L808.5,571 L809,572 L809,571 L809.5,571 L810,572 L810.5,571 L810.5,572 L811,571 L811.5,572 L812,571 L812,572 L812.5,571 L813,572 L813,571 L813.5,572 L814,571 L814,572 L814.5,572 L814.5,571 L815,571 L815.5,572 L815.5,571 L816,572 L816.5,572 L817,572 L817.5,571 L817.5,572 L818,572 L818.5,571 L819,571 L819,572 L819.5,571 L820,572 L820.5,572 L820.5,571 L821,572 L821.5,572 L822,572 L822,571 L822.5,572 L823,572 L823.5,572 L824,571 L824.5,572 L825,571 L825,572 L825.5,571 L825.5,572 L826,572 L826.5,571 L826.5,572 L827,571 L827,572 L827.5,572 L828,572 L828,571 L828.5,572 L829,571 L829.5,572 L830,571 L830,572 L830.5,571 L831,571 L831.5,572 L832,572 L832,571 L832.5,572 L833,572 L833,571 L833.5,571 L834,571 L834.5,571 L835,572 L835.5,571 L836,571 L836.5,571 L836.5,572 L837,572 L837,571 L837.5,572 L838,571 L838.5,572 L839,572 L839.5,572 L840,571 L840,572 L840.5,572 L841,572 L841,571 L841.5,571 L841.5,572 L842,572 L842.5,572 L843,571 L843,572 L843.5,572 L844,572 L844.5,572 L845,572 L845,571 L845.5,572 L846,572 L846.5,571 L846.5,572 L847,572 L847.5,572 L847.5,571 L848,571 L848,572 L848.5,571 L849,571 L849,572 L849.5,572 L849.5,571 L850,572 L850.5,571 L850.5,572 L851,572 L851.5,572 L852,572 L852.5,572 L853,572 L853.5,571 L854,571 L854,572 L854.5,571 L854.5,572 L855,571 L855.5,572 L855.5,571 L856,571 L856.5,571 L857,572 L857,571 L857.5,572 L858,572 L858.5,572 L859,572 L859.5,572 L860,572 L860,571 L860.5,572 L860.5,571 L861,571 L861.5,571 L862,571 L862,572 L862.5,571 L863,572 L863.5,571 L863.5,572 L864,572 L864.5,572 L865,572 L865.5,572 L866,571 L866.5,572 L867,572 L867.5,572 L868,572 L868.5,572 L868.5,571 L869,572 L869.5,572 L870,571 L870.5,572 L871,571 L871.5,572 L871.5,571 L872,572 L872.5,571 L873,572 L873.5,572 L874,572 L874.5,572 L875,572 L875.5,572 L876,572 L876.5,572 L877,571 L877,572 L877.5,572 L878,572 L878.5,572 L879,572 L879.5,571 L879.5,572 L880,572 L880.5,572 L881,572 L881.5,572 L882,572 L882.5,572 L883,572 L883.5,572 L883.5,571 L884,571 L884.5,572 L885,572 L885,571 L885.5,572 L886,571 L886,572 L886.5,572 L887,572 L887.5,572 L888,572 L888.5,572 L889,572 L889.5,571 L889.5,572 L890,572 L890.5,572 L890.5,571 L891,572 L891.5,572 L891.5,571 L892,572 L892.5,572 L893,572 L893.5,572 L894,572 L894.5,572 L895,572 L895.5,571 L895.5,572 L896,572 L896.5,572 L897,571 L897,572 L897.5,572 L897.5,571 L898,572 L898.5,571 L899,572 L899.5,572 L900,571 L900.5,572 L900.5,571 L901,572 L901.5,572 L902,572 L902.5,572 L903,572 L903.5,572 L904,571 L904.5,572 L905,572 L905.5,572 L906,572 L906.5,572 L907,572 L907.5,572 L908,572 L908.5,572 L909,572 L909,571 L909.5,572 L910,572 L910.5,572 L910.5,571 L911,571 L911.5,572 L912,572 L912.5,571 L913,572 L913.5,571 L913.5,572 L914,572 L914.5,571 L914.5,572 L915,572 L915.5,572 L915.5,571 L916,572 L916.5,572 L917,572 L917.5,571 L918,572 L918.5,572 L919,571 L919.5,572 L920,571 L920,572 L920.5,571 L921,572 L921.5,572 L922,572 L922.5,572 L923,572 L923.5,572 L924,572 L924.5,572 L925,572 L925.5,572 L926,572 L926.5,572 L927,572 L927.5,572 L928,572 L928,571 L928.5,571 L929,572 L929,571 L929.5,572 L930,572 L930.5,572 L931,572 L931.5,572 L932,573 L932.5,572 L933,572 L933.5,572 L934,572 L934.5,572 L935,572 L935.5,572 L936,572 L936.5,572 L937,572 L937.5,572 L938,572 L938.5,572 L939,572 L939.5,572 L940,572 L940.5,572 L941,572 L941.5,572 L942,572 L942.5,571 L942.5,572 L943,572 L943.5,572 L944,572 L944.5,571 L945,572 L945.5,572 L946,572 L946.5,572 L947,572 L947.5,572 L948,572 L948.5,573 L948.5,572 L949,571 L949,572 L949.5,572 L950,572 L950.5,572 L951,572 L951.5,572 L952,572 L952.5,572 L953,572 L953.5,572 L954,572 L954.5,572 L955,572 L955.5,572 L956,571 L956.5,572 L957,572 L957.5,572 L958,572 L958.5,572 L959,572 L959.5,572 L960,572 L960.5,572 L961,572 L961.5,572 L961.5,573 L962,572 L962.5,572 L963,572 L963,573 L963.5,572 L964,572 L964.5,572 L965,572 L965.5,572 L966,572 L966.5,572 L967,573 L967.5,573 L967.5,572 L968,572 L968.5,572 L969,572 L969.5,572 L970,572 L970.5,572 L971,573 L971.5,572 L972,572 L972.5,572 L973,572 L973.5,572 L974,572 L974.5,572 L975,572 L975.5,572 L976,572 L976.5,572 L976.5,573 L977,572 L977.5,572 L978,573 L978,572 L978.5,572 L979,572 L979,573 L979.5,572 L979.5,573 L980,572 L980.5,572 L980.5,573 L981,572 L981.5,572 L982,572 L982.5,572 L983,572 L983.5,572 L984,572 L984.5,572 L985,572 L985.5,572 L986,572 L986.5,572 L987,572 L987.5,573 L987.5,572 L988,572 L988.5,572 L989,573 L989,572 L989.5,572 L990,572 L990.5,573 L990.5,572 L991,572 L991.5,573 L991.5,572 L992,572 L992.5,572 L993,573 L993.5,572 L993.5,573 L994,572 L994,573 L994.5,572 L995,572 L995.5,572 L996,573 L996.5,572 L997,572 L997,573 L997.5,573 L998,572 L998,573 L998.5,572 L999,572 L999.5,572 L1000,572 L1000.5,572 L1000.5,573 L1001,572 L1001.5,572 L1002,572 L1002,573 L1002.5,572 L1003,573 L1003,572 L1003.5,572 L1004,573 L1004.5,572 L1005,573 L1005,572 L1005.5,572 L1006,572 L1006,573 L1006.5,572 L1007,572 L1007.5,573 L1008,573 L1008.5,572 L1009,572 L1009.5,572 L1009.5,573 L1010,572 L1010.5,572 L1011,572 L1011.5,573 L1011.5,572 L1012,572 L1012.5,573 L1012.5,572 L1013,572 L1013.5,573 L1014,572 L1014.5,573 L1014.5,572 L1015,572 L1015.5,572 L1015.5,573 L1016,572 L1016.5,573 L1017,572 L1017.5,572 L1018,572 L1018.5,572 L1019,572 L1019,573 L1019.5,573 L1020,572 L1020.5,572 L1020.5,573 L1021,572 L1021,573 L1021.5,572 L1022,573 L1022,572 L1022.5,572 L1023,572 L1023.5,572 L1024,572 L1024.5,572 L1025,573 L1025.5,572 L1026,573 L1026,572 L1026.5,572 L1027,572 L1027.5,572 L1028,572 L1028.5,572 L1028.5,573 L1029,573 L1029,572 L1029.5,573 L1030,573 L1030,572 L1030.5,573 L1030.5,572 L1031,573 L1031.5,572 L1032,572 L1032.5,572 L1032.5,573 L1033,572 L1033.5,573 L1033.5,572 L1034,573 L1034.5,573 L1035,572 L1035.5,572 L1036,572 L1036.5,573 L1037,572 L1037,573 L1037.5,572 L1038,572 L1038.5,572 L1038.5,573 L1039,572 L1039.5,572 L1040,573 L1040,572 L1040.5,572 L1041,573 L1041.5,572 L1042,572 L1042.5,573 L1043,572 L1043.5,573 L1043.5,572 L1044,573 L1044.5,574 L1045,574 L1045.5,575 L1046,576 L1046,575 L1046.5,576 L1046.5,577 L1047,577 L1047,578 L1047.5,578 L1048,578 L1048,579 L1048.5,579 L1049,579 L1049.5,579 L1050,579 L1050,578 L1050.5,580 L1051,579 L1051.5,579 L1052,578 L1052.5,579 L1053,580 L1053,579 L1053.5,579 L1054,579 L1054.5,579 L1055,579 L1055,580 L1055.5,579 L1056,578 L1056,579 L1056.5,579 L1057,579 L1057.5,579 L1058,580 L1058,579 L1058.5,579 L1059,579 L1059,580 L1059.5,579 L1060,579 L1060.5,578 L1060.5,579 L1061,579 L1061.5,579 L1062,579 L1062.5,579 L1062.5,580 L1063,579 L1063.5,579 L1064,579 L1064.5,579 L1065,579 L1065.5,579 L1066,579 L1066,580 L1066.5,579 L1067,579 L1067.5,578 L1068,579 L1068.5,579 L1068.5,580 L1069,579 L1069.5,579 L1070,579 L1070.5,579 L1071,579 L1071.5,579 L1072,579 L1072.5,579 L1073,579 L1073.5,579 L1074,579 L1074.5,579 L1075,579 L1075,580 L1075.5,579 L1076,579 L1076.5,579 L1077,579 L1077.5,579 L1078,579 L1078.5,580 L1078.5,579 L1079,579 L1079,580 L1079.5,579 L1080,579 L1080.5,579 L1080.5,578 L1081,579 L1081.5,579 L1081.5,578 L1082,579 L1082.5,579 L1083,579 L1083.5,579 L1084,579 L1084.5,579 L1085,579 L1085.5,579 L1086,579 L1086.5,579 L1087,579 L1087.5,579 L1088,579 L1088.5,579 L1088.5,578 L1089,579 L1089.5,579 L1090,579 L1090.5,579 L1091,579 L1091.5,579 L1092,579 L1092.5,579 L1093,579 L1093.5,578 L1093.5,579 L1094,579 L1094.5,578 L1094.5,579 L1095,579 L1095.5,579 L1096,579 L1096,578 L1096.5,578 L1096.5,579 L1097,579 L1097.5,580 L1097.5,579 L1098,579 L1098.5,579 L1099,580 L1099,579 L1099.5,578 L1099.5,579 L1100,580 L1100.5,579 L1101,578 L1101,579 L1101.5,579 L1102,579 L1102.5,579 L1103,578 L1103,579 L1103.5,579 L1104,579 L1104,578 L1104.5,579 L1105,579 L1105.5,579 L1106,579 L1106.5,579 L1107,579 L1107.5,579 L1108,579 L1108.5,579 L1109,578 L1109.5,579 L1110,579 L1110.5,579 L1111,579 L1111.5,579 L1112,579 L1112,578 L1112.5,579 L1113,579 L1113.5,579 L1113.5,578 L1114,579 L1114.5,578 L1115,579 L1115.5,579 L1116,580 L1116.5,579 L1117,579 L1117.5,579 L1118,579 L1118.5,579 L1119,579 L1119.5,579 L1120,579 L1120,578 L1120.5,579 L1121,579 L1121.5,579 L1122,579 L1122.5,579 L1123,579 L1123.5,579 L1124,579 L1124.5,580 L1124.5,579 L1125,579 L1125.5,579" fill="none" stroke="#0000ff" stroke-width="1"/>
<path d="M45,580 L45.5,579 L46,579 L46,580 L46.5,579 L47,579 L47.5,579 L47.5,580 L48,580 L48,579 L48.5,579 L49,579 L49,580 L49.5,579 L50,580 L50,562 L50.5,562 L51,564 L51.5,563 L52,564 L52.5,564 L53,565 L53,564 L53.5,564 L54,564 L54,565 L54.5,565 L55,565 L55.5,565 L56,564 L56,565 L56.5,565 L57,565 L57,564 L57.5,564 L57.5,566 L58,565 L58.5,565 L59,565 L59,566 L59.5,565 L60,566 L60.5,565 L61,565 L61,562 L61.5,557 L62,553 L62,557 L62.5,562 L62.5,565 L63,566 L63.5,566 L64,566 L64.5,566 L65,566 L65.5,566 L65.5,567 L66,566 L66,567 L66.5,567 L67,566 L67.5,566 L67.5,567 L68,567 L68.5,567 L68.5,566 L69,566 L69,567 L69.5,566 L70,567 L70.5,566 L70.5,567 L71,567 L71.5,567 L72,566 L72,568 L72.5,567 L73,566 L73.5,567 L74,565 L74,561 L74.5,559 L75,561 L75,565 L75.5,567 L76,567 L76.5,566 L76.5,563 L77,562 L77,563 L77.5,566 L78,567 L78.5,567 L79,567 L79.5,567 L80,567 L80.5,567 L80.5,568 L81,567 L81.5,567 L81.5,568 L82,568 L82.5,567 L83,568 L83.5,567 L83.5,568 L84,568 L84.5,568 L85,568 L85.5,567 L86,568 L86.5,567 L86.5,565 L87,562 L87.5,557 L87.5,555 L88,557 L88,562 L88.5,566 L88.5,567 L89,568 L89.5,567 L89.5,568 L90,568 L90.5,567 L91,568 L91,567 L91.5,568 L92,568 L92.5,567 L93,568 L93.5,568 L94,568 L94.5,568 L95,569 L95.5,568 L95.5,567 L96,567 L96,568 L96.5,567 L96.5,568 L97,567 L97.5,568 L98,568 L98,569 L98.5,567 L99,569 L99,567 L99.5,567 L99.5,568 L100,569 L100.5,567 L101,568 L101.5,568 L102,568 L102.5,568 L103,568 L103.5,567 L103.5,560 L104,530 L104,475 L104.5,443 L104.5,475 L105,530 L105.5,560 L105.5,567 L106,568 L106,564 L106.5,548 L107,533 L107,548 L107.5,564 L107.5,567 L108,567 L108.5,568 L108.5,564 L109,531 L109,417 L109.5,327 L110,417 L110,531 L110.5,565 L110.5,568 L111,564 L111.5,548 L111.5,533 L112,548 L112,564 L112.5,568 L113,568 L113.5,567 L113.5,568 L114,567 L114,566 L114.5,564 L115,562 L115,561 L115.5,562 L115.5,564 L116,566 L116.5,567 L116.5,568 L117,568 L117.5,568 L118,568 L118.5,568 L118.5,569 L119,569 L119,567 L119.5,568 L120,567 L120,568 L120.5,569 L120.5,568 L121,568 L121.5,569 L121.5,568 L122,569 L122.5,567 L123,569 L123.5,567 L123.5,568 L124,569 L124.5,569 L125,568 L125,569 L125.5,567 L126,568 L126,567 L126.5,567 L126.5,569 L127,569 L127,568 L127.5,569 L128,568 L128,569 L128.5,569 L128.5,567 L129,569 L129.5,568 L130,568 L130,569 L130.5,567 L131,567 L131.5,569 L132,568 L132.5,567 L132.5,568 L133,568 L133.5,569 L134,568 L134,569 L134.5,569 L135,569 L135,567 L135.5,568 L136,568 L136.5,567 L136.5,568 L137,569 L137.5,568 L137.5,569 L138,568 L138.5,569 L139,568 L139.5,568 L140,569 L140.5,569 L141,569 L141,568 L141.5,569 L142,569 L142,568 L142.5,569 L142.5,568 L143,568 L143.5,569 L144,568 L144.5,569 L144.5,567 L145,569 L145.5,568 L145.5,567 L146,568 L146,569 L146.5,569 L147,568 L147.5,569 L147.5,568 L148,569 L148.5,568 L148.5,569 L149,569 L149,568 L149.5,568 L150,568 L150.5,568 L151,569 L151,568 L151.5,569 L152,568 L152.5,569 L153,567 L153.5,568 L154,568 L154.5,566 L155,560 L155,549 L155.5,542 L155.5,549 L156,560 L156.5,566 L156.5,568 L157,568 L157.5,568 L158,569 L158.5,568 L159,568 L159.5,569 L160,569 L160,568 L160.5,568 L161,568 L161.5,568 L162,569 L162,568 L162.5,568 L163,569 L163,568 L163.5,568 L164,568 L164.5,568 L165,568 L165,564 L165.5,550 L166,522 L166,506 L166.5,522 L166.5,550 L167,564 L167,568 L167.5,568 L168,568 L168.5,568 L169,568 L169.5,568 L170,568 L170,569 L170.5,569 L171,569 L171,568 L171.5,568 L171.5,569 L172,568 L172.5,568 L173,568 L173.5,568 L174,568 L174.5,566 L174.5,564 L175,560 L175,558 L175.5,560 L176,564 L176,567 L176.5,568 L177,568 L177.5,568 L178,568 L178,569 L178.5,568 L179,568 L179.5,568 L179.5,567 L180,563 L180.5,548 L180.5,515 L181,473 L181,452 L181.5,473 L181.5,515 L182,548 L182.5,563 L182.5,567 L183,568 L183.5,568 L184,568 L184.5,568 L184.5,569 L185,569 L185.5,568 L185.5,569 L186,568 L186,569 L186.5,568 L187,568 L187.5,568 L188,568 L188.5,568 L189,568 L189,569 L189.5,569 L190,568 L190.5,568 L191,568 L191.5,567 L192,561 L192,551 L192.5,544 L192.5,551 L193,561 L193.5,567 L193.5,568 L194,568 L194.5,568 L195,569 L195.5,569 L195.5,568 L196,568 L196.5,568 L197,569 L197.5,569 L198,568 L198.5,568 L199,568 L199.5,568 L200,568 L200,567 L200.5,556 L200.5,516 L201,484 L201.5,516 L201.5,556 L202,567 L202,568 L202.5,568 L203,568 L203,569 L203.5,569 L203.5,568 L204,568 L204.5,568 L205,568 L205.5,568 L206,568 L206.5,568 L206.5,569 L207,568 L207.5,568 L208,568 L208.5,568 L209,568 L209.5,569 L210,568 L210.5,568 L211,569 L211,568 L211.5,569 L212,569 L212.5,568 L213,569 L213.5,568 L213.5,569 L214,568 L214.5,568 L215,568 L215.5,568 L216,567 L216,563 L216.5,555 L216.5,551 L217,555 L217.5,563 L217.5,567 L218,568 L218.5,568 L219,569 L219,568 L219.5,568 L220,569 L220.5,568 L220.5,569 L221,568 L221,569 L221.5,568 L222,569 L222.5,569 L222.5,568 L223,568 L223.5,569 L224,568 L224.5,569 L225,568 L225.5,568 L225.5,569 L226,568 L226,569 L226.5,568 L227,569 L227,568 L227.5,568 L228,569 L228.5,568 L228.5,569 L229,569 L229,568 L229.5,569 L229.5,568 L230,569 L230.5,568 L231,569 L231.5,569 L232,569 L232.5,569 L233,568 L233.5,568 L233.5,569 L234,568 L234.5,565 L235,559 L235,555 L235.5,559 L235.5,565 L236,568 L236.5,569 L237,569 L237.5,569 L238,569 L238.5,568 L238.5,569 L239,568 L239,569 L239.5,568 L240,568 L240,567 L240.5,564 L240.5,557 L241,548 L241.5,543 L241.5,548 L242,557 L242,564 L242.5,567 L243,568 L243,569 L243.5,568 L244,569 L244,568 L244.5,569 L245,569 L245,568 L245.5,569 L246,569 L246.5,569 L246.5,568 L247,568 L247.5,566 L248,564 L248,562 L248.5,562 L249,564 L249.5,566 L249.5,568 L250,568 L250.5,568 L251,568 L251,569 L251.5,568 L252,568 L252,569 L252.5,569 L253,568 L253.5,569 L253.5,568 L254,569 L254.5,569 L255,569 L255.5,569 L256,568 L256,569 L256.5,568 L257,568 L257.5,566 L257.5,563 L258,561 L258,563 L258.5,566 L259,568 L259.5,568 L259.5,566 L260,562 L260,560 L260.5,562 L261,566 L261,568 L261.5,569 L262,568 L262.5,567 L262.5,561 L263,548 L263,533 L263.5,525 L264,533 L264,548 L264.5,561 L264.5,567 L265,568 L265.5,569 L265.5,568 L266,569 L266.5,568 L267,568 L267.5,569 L268,569 L268.5,569 L269,569 L269,568 L269.5,568 L269.5,569 L270,569 L270.5,568 L270.5,569 L271,568 L271.5,568 L272,568 L272,569 L272.5,568 L273,569 L273.5,569 L274,569 L274.5,569 L275,569 L275.5,568 L276,568 L276,567 L276.5,565 L277,564 L277,565 L277.5,567 L277.5,568 L278,569 L278.5,568 L278.5,569 L279,569 L279.5,568 L280,569 L280,568 L280.5,568 L281,568 L281.5,568 L282,568 L282,569 L282.5,569 L283,569 L283,568 L283.5,568 L284,568 L284,569 L284.5,568 L285,568 L285,569 L285.5,569 L285.5,568 L286,569 L286.5,569 L287,568 L287,569 L287.5,568 L288,569 L288.5,568 L288.5,570 L289,569 L289.5,569 L290,569 L290,568 L290.5,567 L290.5,565 L291,564 L291.5,565 L291.5,567 L292,568 L292,569 L292.5,568 L293,569 L293.5,568 L294,569 L294.5,568 L294.5,569 L295,568 L295.5,569 L296,568 L296,569 L296.5,568 L297,568 L297.5,568 L298,567 L298,562 L298.5,552 L298.5,547 L299,552 L299.5,562 L299.5,567 L300,568 L300.5,569 L301,569 L301,568 L301.5,569 L302,569 L302.5,568 L302.5,570 L303,569 L303.5,568 L304,568 L304.5,569 L305,569 L305.5,569 L306,568 L306.5,569 L307,569 L307.5,569 L308,569 L308.5,568 L309,569 L309.5,568 L310,569 L310.5,569 L311,568 L311.5,569 L312,568 L312.5,568 L312.5,567 L313,565 L313.5,564 L313.5,565 L314,567 L314,568 L314.5,566 L314.5,562 L315,560 L315.5,562 L315.5,566 L316,568 L316,569 L316.5,569 L317,568 L317,569 L317.5,569 L317.5,568 L318,569 L318.5,569 L318.5,568 L319,569 L319.5,568 L320,569 L320.5,569 L320.5,568 L321,569 L321.5,570 L322,568 L322,569 L322.5,570 L322.5,569 L323,569 L323.5,568 L323.5,569 L324,569 L324,568 L324.5,570 L325,569 L325,568 L325.5,569 L326,569 L326.5,568 L327,570 L327,569 L327.5,569 L328,569 L328,570 L328.5,569 L329,569 L329.5,568 L330,568 L330,569 L330.5,570 L330.5,569 L331,569 L331.5,569 L332,568 L332,570 L332.5,568 L333,570 L333,569 L333.5,568 L333.5,569 L334,569 L334.5,569 L334.5,568 L335,568 L335,569 L335.5,569 L336,568 L336.5,566 L336.5,565 L337,564 L337.5,565 L337.5,566 L338,568 L338.5,568 L339,569 L339.5,569 L340,569 L340,568 L340.5,569 L341,569 L341.5,569 L341.5,570 L342,569 L342.5,569 L343,568 L343,569 L343.5,569 L344,570 L344,569 L344.5,569 L345,569 L345.5,569 L346,569 L346.5,569 L346.5,570 L347,568 L347.5,569 L348,570 L348,569 L348.5,569 L349,569 L349,568 L349.5,568 L350,567 L350.5,566 L350.5,567 L351,568 L351,569 L351.5,569 L352,569 L352.5,569 L353,569 L353,570 L353.5,569 L354,568 L354,569 L354.5,570 L355,569 L355.5,569 L355.5,570 L356,569 L356.5,568 L357,569 L357.5,569 L357.5,570 L358,569 L358.5,570 L358.5,569 L359,569 L359.5,570 L360,570 L360,569 L360.5,570 L360.5,569 L361,569 L361.5,569 L362,569 L362.5,568 L362.5,567 L363,565 L363.5,564 L363.5,565 L364,567 L364,569 L364.5,568 L365,569 L365.5,569 L365.5,568 L366,568 L366.5,566 L366.5,564 L367,566 L367,568 L367.5,569 L368,569 L368.5,569 L368.5,568 L369,569 L369.5,570 L370,569 L370,570 L370.5,570 L370.5,569 L371,569 L371.5,569 L372,569 L372.5,569 L373,570 L373,569 L373.5,569 L374,569 L374.5,568 L374.5,569 L375,569 L375,570 L375.5,569 L376,569 L376,570 L376.5,568 L376.5,570 L377,568 L377,570 L377.5,568 L378,568 L378,569 L378.5,568 L378.5,570 L379,568 L379.5,569 L380,570 L380,569 L380.5,569 L381,569 L381.5,569 L381.5,570 L382,568 L382.5,568 L382.5,569 L383,569 L383.5,568 L384,569 L384.5,569 L385,568 L385,569 L385.5,569 L386,569 L386,567 L386.5,565 L386.5,564 L387,565 L387.5,567 L387.5,569 L388,569 L388.5,569 L389,569 L389,568 L389.5,568 L389.5,569 L390,569 L390.5,569 L390.5,570 L391,569 L391,570 L391.5,569 L392,569 L392,570 L392.5,569 L392.5,568 L393,569 L393,568 L393.5,569 L394,569 L394,568 L394.5,569 L394.5,570 L395,569 L395.5,569 L396,569 L396.5,569 L397,569 L397.5,570 L397.5,569 L398,568 L398.5,570 L398.5,569 L399,569 L399.5,569 L400,568 L400,570 L400.5,568 L400.5,569 L401,569 L401,570 L401.5,569 L402,570 L402,569 L402.5,568 L402.5,569 L403,569 L403.5,569 L404,569 L404.5,569 L405,570 L405,569 L405.5,569 L406,568 L406.5,569 L406.5,570 L407,569 L407,570 L407.5,570 L408,570 L408.5,569 L409,569 L409,570 L409.5,570 L410,568 L410,569 L410.5,568 L410.5,569 L411,569 L411.5,569 L412,569 L412.5,568 L413,565 L413,562 L413.5,561 L413.5,562 L414,565 L414.5,568 L414.5,569 L415,569 L415,568 L415.5,568 L415.5,569 L416,569 L416.5,569 L417,569 L417,568 L417.5,569 L418,569 L418.5,569 L419,570 L419.5,569 L419.5,570 L420,569 L420.5,569 L421,569 L421.5,568 L421.5,570 L422,570 L422.5,568 L422.5,570 L423,570 L423,569 L423.5,569 L423.5,568 L424,569 L424.5,570 L424.5,569 L425,569 L425.5,569 L426,570 L426,569 L426.5,569 L426.5,570 L427,569 L427.5,569 L427.5,570 L428,569 L428.5,569 L429,569 L429.5,570 L430,570 L430.5,570 L431,569 L431.5,569 L432,568 L432.5,565 L432.5,558 L433,554 L433,558 L433.5,565 L434,568 L434,569 L434.5,569 L435,569 L435.5,570 L435.5,569 L436,570 L436,569 L436.5,569 L437,569 L437.5,568 L437.5,565 L438,558 L438.5,554 L438.5,558 L439,565 L439,568 L439.5,568 L439.5,569 L440,569 L440.5,569 L441,570 L441,569 L441.5,570 L442,569 L442,570 L442.5,569 L442.5,570 L443,569 L443.5,569 L444,569 L444,570 L444.5,570 L445,569 L445,570 L445.5,569 L446,569 L446.5,570 L446.5,569 L447,569 L447,570 L447.5,570 L447.5,569 L448,570 L448.5,569 L449,569 L449,570 L449.5,569 L450,570 L450,569 L450.5,570 L451,570 L451.5,569 L452,569 L452.5,569 L453,568 L453,567 L453.5,566 L453.5,567 L454,568 L454.5,569 L455,569 L455.5,569 L455.5,570 L456,569 L456.5,570 L456.5,569 L457,569 L457,570 L457.5,570 L458,569 L458.5,569 L459,569 L459.5,569 L459.5,568 L460,567 L460,566 L460.5,567 L461,568 L461,569 L461.5,569 L462,569 L462.5,569 L463,569 L463.5,570 L463.5,569 L464,569 L464.5,569 L464.5,570 L465,570 L465,569 L465.5,570 L466,570 L466,569 L466.5,569 L467,570 L467.5,569 L468,569 L468.5,570 L469,569 L469.5,569 L470,569 L470.5,570 L471,569 L471,570 L471.5,570 L471.5,569 L472,569 L472.5,570 L472.5,569 L473,569 L473.5,570 L474,569 L474.5,569 L474.5,570 L475,569 L475.5,570 L475.5,569 L476,570 L476.5,569 L477,569 L477.5,569 L478,569 L478,570 L478.5,569 L479,569 L479,570 L479.5,570 L480,570 L480.5,569 L480.5,570 L481,570 L481.5,569 L482,569 L482.5,569 L483,570 L483.5,570 L483.5,569 L484,569 L484,570 L484.5,569 L485,569 L485.5,569 L485.5,570 L486,570 L486,569 L486.5,570 L487,570 L487.5,569 L487.5,570 L488,570 L488.5,570 L489,569 L489,570 L489.5,569 L490,569 L490.5,570 L491,569 L491.5,569 L491.5,570 L492,570 L492.5,569 L493,570 L493.5,569 L494,570 L494,569 L494.5,569 L495,569 L495,570 L495.5,569 L495.5,570 L496,570 L496.5,570 L496.5,569 L497,570 L497.5,570 L498,570 L498,569 L498.5,570 L498.5,569 L499,569 L499.5,569 L499.5,561 L500,403 L500,167 L500.5,403 L501,561 L501,569 L501.5,570 L501.5,569 L502,568 L502,563 L502.5,555 L503,549 L503,555 L503.5,563 L503.5,568 L504,569 L504.5,570 L504.5,569 L505,570 L505.5,569 L506,570 L506,569 L506.5,570 L507,570 L507.5,570 L508,569 L508.5,569 L509,570 L509,569 L509.5,570 L510,570 L510,569 L510.5,569 L511,569 L511.5,569 L512,570 L512.5,570 L512.5,569 L513,569 L513.5,570 L514,570 L514,569 L514.5,569 L514.5,570 L515,569 L515.5,569 L516,570 L516.5,569 L517,570 L517.5,569 L517.5,570 L518,570 L518,569 L518.5,569 L519,569 L519.5,570 L520,569 L520.5,570 L520.5,569 L521,570 L521,569 L521.5,569 L522,570 L522.5,570 L522.5,569 L523,569 L523.5,569 L523.5,570 L524,570 L524.5,569 L525,570 L525.5,569 L526,569 L526,570 L526.5,569 L527,569 L527,570 L527.5,569 L527.5,570 L528,569 L528.5,570 L529,570 L529.5,570 L530,569 L530,570 L530.5,570 L530.5,569 L531,569 L531.5,569 L532,570 L532.5,570 L533,569 L533.5,568 L533.5,565 L534,562 L534,558 L534.5,556 L535,558 L535,562 L535.5,565 L535.5,568 L536,569 L536.5,569 L536.5,570 L537,570 L537,569 L537.5,570 L538,570 L538.5,570 L539,570 L539.5,570 L540,570 L540,569 L540.5,569 L541,569 L541.5,570 L542,570 L542.5,570 L543,570 L543.5,569 L544,570 L544.5,571 L544.5,570 L545,569 L545.5,570 L546,571 L546,570 L546.5,570 L546.5,571 L547,571 L547.5,570 L548,570 L548,569 L548.5,568 L548.5,561 L549,549 L549.5,542 L549.5,549 L550,561 L550,568 L550.5,569 L551,570 L551.5,570 L551.5,569 L552,569 L552.5,570 L553,569 L553,570 L553.5,569 L554,569 L554,570 L554.5,569 L554.5,570 L555,570 L555.5,570 L556,570 L556.5,569 L557,570 L557.5,570 L557.5,569 L558,570 L558,569 L558.5,569 L559,570 L559.5,570 L560,570 L560.5,571 L560.5,570 L561,570 L561.5,570 L562,569 L562.5,570 L562.5,569 L563,570 L563.5,570 L564,569 L564.5,569 L564.5,570 L565,570 L565.5,570 L565.5,569 L566,569 L566,567 L566.5,566 L567,567 L567,569 L567.5,570 L568,570 L568.5,570 L569,571 L569,570 L569.5,570 L570,570 L570,569 L570.5,569 L570.5,570 L571,570 L571.5,570 L572,570 L572.5,570 L573,570 L573.5,569 L573.5,570 L574,570 L574.5,569 L575,569 L575.5,569 L575.5,570 L576,570 L576.5,569 L576.5,567 L577,566 L577,567 L577.5,569 L578,569 L578,570 L578.5,569 L579,569 L579,570 L579.5,570 L580,570 L580.5,569 L580.5,571 L581,570 L581.5,570 L581.5,569 L582,570 L582.5,569 L583,570 L583.5,570 L583.5,571 L584,569 L584.5,569 L584.5,571 L585,571 L585,570 L585.5,570 L586,569 L586,570 L586.5,570 L587,569 L587,564 L587.5,535 L588,450 L588,317 L588.5,246 L588.5,317 L589,450 L589.5,535 L589.5,564 L590,569 L590,570 L590.5,570 L591,570 L591,569 L591.5,570 L592,570 L592.5,570 L592.5,571 L593,570 L593.5,570 L594,569 L594,571 L594.5,570 L595,570 L595.5,569 L596,570 L596,569 L596.5,571 L596.5,570 L597,570 L597.5,571 L598,570 L598.5,570 L599,571 L599,570 L599.5,569 L599.5,570 L600,569 L600.5,570 L600.5,569 L601,570 L601.5,570 L602,571 L602.5,570 L602.5,569 L603,571 L603,570 L603.5,570 L604,570 L604,569 L604.5,570 L605,570 L605.5,569 L605.5,570 L606,570 L606,571 L606.5,570 L607,569 L607,570 L607.5,570 L608,570 L608.5,570 L609,570 L609.5,570 L610,570 L610.5,569 L610.5,563 L611,548 L611,538 L611.5,548 L612,563 L612,569 L612.5,570 L613,570 L613.5,570 L614,570 L614.5,569 L615,569 L615.5,556 L615.5,513 L616,479 L616.5,513 L616.5,556 L617,569 L617,570 L617.5,570 L618,569 L618,563 L618.5,559 L618.5,563 L619,569 L619,570 L619.5,570 L620,570 L620.5,571 L620.5,570 L621,569 L621.5,569 L621.5,570 L622,569 L622,571 L622.5,570 L623,571 L623,570 L623.5,569 L623.5,571 L624,570 L624.5,570 L624.5,569 L625,569 L625,571 L625.5,570 L626,569 L626,570 L626.5,571 L626.5,569 L627,570 L627.5,570 L628,570 L628.5,570 L628.5,571 L629,570 L629.5,569 L629.5,570 L630,570 L630.5,571 L631,571 L631,569 L631.5,570 L632,570 L632.5,570 L633,569 L633,567 L633.5,566 L633.5,567 L634,569 L634.5,570 L635,570 L635.5,570 L636,570 L636,569 L636.5,571 L637,569 L637.5,570 L638,569 L638,570 L638.5,571 L639,570 L639,571 L639.5,570 L640,570 L640.5,571 L640.5,569 L641,570 L641,569 L641.5,570 L641.5,569 L642,571 L642.5,571 L642.5,570 L643,569 L643,570 L643.5,570 L644,571 L644,570 L644.5,570 L644.5,569 L645,570 L645.5,570 L646,570 L646,569 L646.5,570 L647,563 L647,524 L647.5,430 L647.5,367 L648,430 L648.5,524 L648.5,563 L649,563 L649,534 L649.5,508 L649.5,534 L650,563 L650.5,570 L651,570 L651.5,570 L652,570 L652.5,570 L652.5,571 L653,570 L653.5,570 L654,570 L654,568 L654.5,562 L655,550 L655,542 L655.5,550 L655.5,562 L656,568 L656.5,570 L657,570 L657.5,570 L658,571 L658.5,571 L659,570 L659,571 L659.5,570 L660,569 L660,570 L660.5,570 L660.5,569 L661,570 L661.5,570 L662,570 L662.5,570 L663,570 L663.5,571 L663.5,570 L664,570 L664.5,570 L664.5,571 L665,570 L665,569 L665.5,569 L665.5,570 L666,570 L666.5,570 L666.5,571 L667,571 L667,570 L667.5,570 L668,570 L668.5,570 L669,570 L669.5,570 L670,569 L670,564 L670.5,556 L671,551 L671,556 L671.5,564 L671.5,569 L672,570 L672.5,570 L672.5,569 L673,569 L673,571 L673.5,571 L673.5,569 L674,571 L674.5,569 L674.5,571 L675,570 L675,571 L675.5,571 L676,570 L676.5,570 L677,570 L677.5,570 L678,570 L678,568 L678.5,560 L679,544 L679,535 L679.5,544 L679.5,560 L680,568 L680.5,570 L681,570 L681.5,571 L681.5,570 L682,570 L682.5,570 L683,571 L683,569 L683.5,571 L684,570 L684,571 L684.5,570 L684.5,571 L685,570 L685.5,570 L686,570 L686.5,570 L687,570 L687,569 L687.5,569 L687.5,567 L688,563 L688.5,557 L688.5,554 L689,557 L689,563 L689.5,567 L689.5,569 L690,570 L690.5,570 L691,570 L691.5,570 L692,570 L692.5,570 L692.5,571 L693,570 L693.5,570 L693.5,571 L694,570 L694.5,570 L695,570 L695.5,570 L696,570 L696.5,571 L697,570 L697.5,570 L698,570 L698.5,570 L698.5,571 L699,570 L699.5,571 L700,571 L700.5,571 L700.5,570 L701,571 L701.5,571 L701.5,570 L702,569 L702,570 L702.5,570 L703,570 L703,571 L703.5,570 L704,570 L704.5,570 L705,570 L705.5,570 L706,570 L706.5,570 L707,569 L707,567 L707.5,562 L708,559 L708,562 L708.5,567 L708.5,569 L709,570 L709.5,569 L709.5,566 L710,559 L710,555 L710.5,559 L711,566 L711,569 L711.5,570 L712,570 L712.5,571 L713,570 L713.5,571 L713.5,569 L714,571 L714.5,569 L714.5,570 L715,570 L715,571 L715.5,571 L716,570 L716.5,570 L716.5,571 L717,570 L717.5,570 L718,570 L718.5,570 L719,570 L719.5,570 L719.5,571 L720,571 L720.5,570 L721,570 L721.5,571 L721.5,570 L722,570 L722.5,570 L722.5,571 L723,571 L723,569 L723.5,569 L724,570 L724.5,570 L725,570 L725.5,571 L725.5,570 L726,570 L726.5,570 L727,570 L727.5,570 L727.5,569 L728,568 L728,569 L728.5,570 L729,570 L729.5,570 L730,570 L730.5,570 L731,570 L731.5,570 L732,570 L732,571 L732.5,571 L733,571 L733.5,570 L733.5,571 L734,570 L734,571 L734.5,571 L735,570 L735,571 L735.5,571 L735.5,570 L736,570 L736,571 L736.5,571 L737,570 L737,571 L737.5,570 L737.5,571 L738,570 L738.5,571 L738.5,570 L739,571 L739,570 L739.5,570 L740,570 L740,571 L740.5,570 L740.5,571 L741,570 L741.5,570 L741.5,571 L742,570 L742,571 L742.5,571 L743,570 L743.5,570 L743.5,571 L744,570 L744,571 L744.5,570 L745,571 L745.5,570 L746,570 L746.5,570 L746.5,569 L747,563 L747,552 L747.5,545 L748,552 L748,563 L748.5,569 L748.5,570 L749,570 L749.5,570 L750,570 L750,571 L750.5,571 L750.5,570 L751,571 L751.5,570 L751.5,571 L752,570 L752.5,570 L753,570 L753,571 L753.5,570 L753.5,571 L754,571 L754.5,570 L754.5,571 L755,571 L755,570 L755.5,570 L756,570 L756,571 L756.5,570 L756.5,571 L757,570 L757.5,570 L758,571 L758.5,571 L758.5,570 L759,570 L759.5,570 L760,570 L760,568 L760.5,562 L761,559 L761,562 L761.5,568 L761.5,570 L762,570 L762.5,570 L763,570 L763.5,570 L764,570 L764,571 L764.5,570 L764.5,571 L765,570 L765.5,571 L765.5,570 L766,571 L766,570 L766.5,571 L766.5,570 L767,570 L767.5,571 L767.5,570 L768,571 L768.5,570 L769,571 L769.5,570 L770,571 L770.5,570 L770.5,571 L771,571 L771.5,571 L772,571 L772,570 L772.5,570 L773,567 L773.5,562 L773.5,555 L774,552 L774,555 L774.5,562 L774.5,567 L775,570 L775.5,567 L775.5,561 L776,554 L776,551 L776.5,554 L777,561 L777,567 L777.5,570 L778,570 L778.5,570 L778.5,571 L779,571 L779.5,571 L780,570 L780.5,568 L780.5,563 L781,561 L781.5,563 L781.5,568 L782,570 L782.5,571 L783,570 L783.5,570 L783.5,571 L784,571 L784,570 L784.5,571 L785,570 L785,571 L785.5,571 L786,571 L786.5,571 L786.5,570 L787,570 L787,571 L787.5,570 L788,571 L788,570 L788.5,571 L789,571 L789.5,570 L790,571 L790.5,571 L791,571 L791.5,570 L792,571 L792.5,571 L793,571 L793.5,570 L793.5,571 L794,571 L794.5,570 L795,570 L795.5,571 L796,570 L796,571 L796.5,571 L797,570 L797.5,570 L797.5,571 L798,571 L798.5,571 L798.5,570 L799,571 L799.5,571 L800,571 L800.5,571 L801,571 L801,570 L801.5,571 L802,571 L802.5,571 L803,571 L803,570 L803.5,571 L804,571 L804.5,571 L805,571 L805,570 L805.5,570 L806,570 L806.5,570 L806.5,571 L807,570 L807.5,571 L808,571 L808.5,571 L809,571 L809,570 L809.5,568 L809.5,565 L810,563 L810.5,565 L810.5,568 L811,570 L811,571 L811.5,571 L812,570 L812,569 L812.5,566 L812.5,564 L813,566 L813,569 L813.5,570 L814,570 L814,571 L814.5,571 L815,571 L815.5,570 L815.5,571 L816,570 L816.5,570 L817,570 L817.5,570 L817.5,569 L818,568 L818.5,566 L818.5,568 L819,569 L819,570 L819.5,570 L820,571 L820,570 L820.5,571 L820.5,570 L821,571 L821.5,570 L822,571 L822,570 L822.5,571 L822.5,570 L823,571 L823.5,571 L824,571 L824,570 L824.5,570 L825,570 L825.5,570 L825.5,571 L826,571 L826.5,570 L827,571 L827.5,570 L828,570 L828,571 L828.5,571 L828.5,570 L829,570 L829.5,571 L830,571 L830,570 L830.5,571 L831,572 L831.5,571 L832,570 L832,571 L832.5,570 L833,571 L833.5,570 L834,571 L834.5,570 L834.5,571 L835,570 L835.5,571 L836,571 L836,570 L836.5,572 L837,572 L837,571 L837.5,571 L838,571 L838,570 L838.5,572 L838.5,570 L839,571 L839.5,570 L839.5,571 L840,570 L840.5,569 L841,567 L841,565 L841.5,567 L841.5,569 L842,570 L842.5,571 L843,571 L843.5,571 L844,570 L844,571 L844.5,570 L845,570 L845,571 L845.5,570 L846,571 L846,570 L846.5,571 L847,571 L847.5,571 L847.5,570 L848,572 L848,570 L848.5,570 L849,571 L849.5,570 L849.5,571 L850,571 L850.5,571 L850.5,570 L851,570 L851,569 L851.5,568 L852,567 L852,568 L852.5,569 L852.5,570 L853,570 L853,571 L853.5,571 L854,570 L854.5,571 L855,571 L855.5,571 L855.5,570 L856,571 L856,570 L856.5,570 L857,571 L857,572 L857.5,570 L857.5,571 L858,571 L858.5,571 L859,572 L859,571 L859.5,571 L860,570 L860,572 L860.5,572 L860.5,571 L861,570 L861,571 L861.5,571 L862,571 L862,570 L862.5,570 L863,571 L863.5,572 L863.5,570 L864,571 L864.5,571 L865,570 L865.5,571 L866,571 L866.5,572 L866.5,570 L867,570 L867,572 L867.5,571 L867.5,570 L868,571 L868.5,570 L868.5,571 L869,570 L869.5,572 L870,571 L870,570 L870.5,571 L871,570 L871.5,571 L871.5,570 L872,571 L872,570 L872.5,571 L873,571 L873.5,571 L873.5,572 L874,572 L874.5,571 L875,570 L875,571 L875.5,571 L876,570 L876.5,570 L877,572 L877,571 L877.5,570 L878,570 L878,571 L878.5,571 L879,572 L879.5,572 L879.5,571 L880,571 L880.5,571 L881,571 L881,570 L881.5,570 L881.5,571 L882,571 L882.5,572 L882.5,571 L883,571 L883.5,571 L884,571 L884.5,571 L885,571 L885,570 L885.5,570 L886,570 L886,569 L886.5,568 L886.5,567 L887,568 L887.5,569 L887.5,570 L888,570 L888,571 L888.5,570 L889,571 L889,570 L889.5,571 L890,571 L890.5,571 L891,570 L891.5,572 L891.5,570 L892,570 L892.5,571 L892.5,570 L893,571 L893.5,572 L894,570 L894.5,571 L895,570 L895.5,571 L896,571 L896.5,570 L897,571 L897.5,570 L897.5,569 L898,568 L898.5,568 L899,569 L899,570 L899.5,570 L900,570 L900.5,571 L901,571 L901.5,570 L902,571 L902.5,571 L902.5,570 L903,571 L903.5,572 L903.5,571 L904,571 L904.5,571 L905,572 L905.5,571 L905.5,570 L906,572 L906.5,570 L906.5,571 L907,571 L907,572 L907.5,572 L907.5,570 L908,572 L908.5,572 L908.5,571 L909,572 L909,571 L909.5,570 L910,572 L910,570 L910.5,570 L911,571 L911.5,570 L912,568 L912,566 L912.5,568 L913,570 L913.5,571 L914,571 L914.5,571 L915,570 L915.5,571 L915.5,572 L916,572 L916.5,571 L916.5,572 L917,572 L917,570 L917.5,572 L918,571 L918.5,570 L919,571 L919.5,571 L920,570 L920,571 L920.5,571 L921,569 L921,567 L921.5,566 L921.5,567 L922,569 L922,571 L922.5,571 L923,571 L923.5,571 L924,571 L924.5,572 L924.5,570 L925,572 L925.5,571 L926,572 L926,570 L926.5,571 L926.5,572 L927,571 L927.5,571 L928,572 L928.5,571 L929,571 L929,572 L929.5,572 L929.5,571 L930,572 L930,571 L930.5,570 L931,570 L931,571 L931.5,572 L931.5,571 L932,572 L932.5,571 L933,572 L933,571 L933.5,571 L934,571 L934.5,571 L934.5,570 L935,568 L935.5,562 L935.5,559 L936,562 L936,568 L936.5,570 L937,571 L937.5,570 L938,571 L938,572 L938.5,572 L939,570 L939,571 L939.5,571 L939.5,572 L940,570 L940.5,572 L940.5,571 L941,571 L941.5,571 L942,572 L942,570 L942.5,570 L942.5,571 L943,571 L943.5,571 L944,571 L944.5,570 L945,571 L945,572 L945.5,571 L945.5,572 L946,571 L946.5,572 L947,571 L947.5,571 L948,571 L948.5,570 L948.5,567 L949,560 L949,557 L949.5,560 L950,567 L950,570 L950.5,571 L951,571 L951.5,571 L952,571 L952,570 L952.5,571 L953,571 L953.5,570 L954,571 L954,572 L954.5,571 L955,571 L955,572 L955.5,572 L955.5,571 L956,572 L956.5,571 L956.5,572 L957,572 L957,571 L957.5,571 L958,572 L958.5,570 L958.5,571 L959,571 L959.5,572 L960,571 L960.5,571 L961,571 L961.5,570 L961.5,568 L962,566 L962,568 L962.5,570 L963,571 L963.5,570 L963.5,571 L964,571 L964.5,572 L964.5,571 L965,572 L965,571 L965.5,571 L966,572 L966.5,572 L966.5,571 L967,571 L967.5,571 L968,572 L968.5,571 L969,572 L969,571 L969.5,571 L970,571 L970,572 L970.5,571 L971,572 L971.5,572 L971.5,571 L972,570 L972.5,571 L973,571 L973.5,571 L974,570 L974,572 L974.5,571 L975,572 L975.5,571 L976,571 L976.5,571 L977,570 L977.5,567 L977.5,564 L978,562 L978,564 L978.5,567 L979,570 L979,571 L979.5,571 L980,571 L980.5,571 L981,571 L981.5,571 L982,570 L982,567 L982.5,563 L982.5,562 L983,563 L983.5,567 L983.5,570 L984,571 L984.5,571 L985,571 L985.5,571 L986,572 L986,571 L986.5,571 L987,571 L987.5,571 L987.5,572 L988,571 L988.5,572 L989,571 L989.5,571 L990,571 L990,572 L990.5,571 L991,571 L991.5,572 L992,571 L992.5,571 L993,572 L993.5,571 L994,572 L994.5,572 L995,571 L995,572 L995.5,571 L995.5,572 L996,571 L996.5,571 L996.5,572 L997,571 L997.5,572 L998,572 L998.5,572 L999,571 L999.5,571 L999.5,572 L1000,572 L1000,571 L1000.5,572 L1000.5,571 L1001,571 L1001.5,571 L1002,572 L1002,571 L1002.5,571 L1003,571 L1003.5,571 L1003.5,564 L1004,543 L1004.5,526 L1004.5,543 L1005,564 L1005,571 L1005.5,571 L1006,571 L1006.5,572 L1006.5,571 L1007,571 L1007.5,571 L1008,571 L1008,569 L1008.5,566 L1008.5,564 L1009,566 L1009.5,569 L1009.5,571 L1010,571 L1010.5,571 L1011,571 L1011.5,571 L1012,569 L1012.5,566 L1012.5,564 L1013,566 L1013,569 L1013.5,571 L1014,571 L1014.5,571 L1014.5,570 L1015,568 L1015.5,566 L1015.5,568 L1016,570 L1016,571 L1016.5,571 L1017,571 L1017.5,571 L1018,572 L1018,571 L1018.5,571 L1019,572 L1019,571 L1019.5,571 L1020,572 L1020.5,571 L1021,572 L1021.5,571 L1022,572 L1022.5,571 L1022.5,572 L1023,571 L1023.5,571 L1023.5,572 L1024,571 L1024,572 L1024.5,572 L1024.5,571 L1025,571 L1025.5,572 L1026,571 L1026,572 L1026.5,572 L1027,571 L1027,572 L1027.5,571 L1027.5,572 L1028,572 L1028.5,571 L1029,571 L1029.5,571 L1030,571 L1030.5,572 L1031,571 L1031,572 L1031.5,571 L1032,572 L1032,571 L1032.5,571 L1033,571 L1033.5,571 L1033.5,570 L1034,568 L1034,566 L1034.5,568 L1035,570 L1035,571 L1035.5,571 L1036,571 L1036.5,571 L1037,571 L1037.5,571 L1038,571 L1038.5,571 L1039,570 L1039,567 L1039.5,566 L1040,567 L1040,570 L1040.5,571 L1041,571 L1041.5,571 L1042,572 L1042,571 L1042.5,571 L1043,572 L1043.5,571 L1043.5,572 L1044,572 L1044.5,573 L1044.5,574 L1045,573 L1045,574 L1045.5,575 L1046,575 L1046.5,575 L1047,576 L1047,578 L1047.5,577 L1048,578 L1048.5,578 L1048.5,577 L1049,578 L1049.5,578 L1049.5,577 L1050,578 L1050,579 L1050.5,578 L1051,577 L1051,578 L1051.5,579 L1051.5,578 L1052,579 L1052.5,578 L1052.5,579 L1053,578 L1053,579 L1053.5,579 L1054,579 L1054,578 L1054.5,578 L1055,579 L1055,577 L1055.5,578 L1056,578 L1056,579 L1056.5,578 L1056.5,577 L1057,577 L1057.5,579 L1058,577 L1058,578 L1058.5,578 L1059,577 L1059,578 L1059.5,578 L1060,578 L1060.5,579 L1060.5,577 L1061,579 L1061.5,578 L1062,577 L1062,578 L1062.5,578 L1062.5,579 L1063,578 L1063,579 L1063.5,578 L1064,578 L1064,579 L1064.5,578 L1065,578 L1065.5,579 L1065.5,577 L1066,577 L1066,578 L1066.5,577 L1067,579 L1067,578 L1067.5,578 L1067.5,579 L1068,578 L1068.5,579 L1069,578 L1069.5,578 L1070,579 L1070,578 L1070.5,578 L1071,579 L1071,578 L1071.5,577 L1072,579 L1072,578 L1072.5,578 L1072.5,577 L1073,579 L1073.5,579 L1074,578 L1074,577 L1074.5,579 L1075,578 L1075.5,577 L1076,578 L1076.5,579 L1076.5,577 L1077,579 L1077,577 L1077.5,578 L1078,579 L1078,577 L1078.5,578 L1079,578 L1079.5,579 L1080,578 L1080.5,579 L1081,579 L1081.5,578 L1082,577 L1082,579 L1082.5,577 L1083,577 L1083,578 L1083.5,577 L1084,578 L1084.5,578 L1085,579 L1085.5,579 L1086,578 L1086,577 L1086.5,579 L1087,577 L1087,578 L1087.5,579 L1088,579 L1088.5,579 L1089,579 L1089.5,578 L1089.5,579 L1090,578 L1090.5,578 L1091,578 L1091,579 L1091.5,578 L1092,578 L1092.5,578 L1093,577 L1093,579 L1093.5,579 L1093.5,578 L1094,578 L1094.5,578 L1094.5,579 L1095,577 L1095,579 L1095.5,578 L1096,579 L1096,578 L1096.5,578 L1097,577 L1097.5,579 L1097.5,578 L1098,578 L1098,579 L1098.5,579 L1099,579 L1099,577 L1099.5,578 L1100,579 L1100.5,578 L1101,579 L1101,578 L1101.5,578 L1102,578 L1102.5,578 L1103,577 L1103,579 L1103.5,579 L1104,578 L1104.5,577 L1104.5,578 L1105,577 L1105.5,578 L1105.5,579 L1106,578 L1106,579 L1106.5,578 L1107,578 L1107.5,578 L1108,579 L1108.5,577 L1108.5,578 L1109,578 L1109.5,579 L1109.5,578 L1110,579 L1110.5,578 L1111,578 L1111,579 L1111.5,578 L1112,578 L1112,579 L1112.5,578 L1112.5,579 L1113,578 L1113.5,579 L1113.5,578 L1114,577 L1114,578 L1114.5,578 L1115,578 L1115,579 L1115.5,578 L1115.5,579 L1116,578 L1116.5,577 L1116.5,578 L1117,578 L1117,577 L1117.5,578 L1117.5,579 L1118,577 L1118.5,578 L1119,579 L1119,578 L1119.5,578 L1120,578 L1120,579 L1120.5,578 L1120.5,579 L1121,578 L1121.5,579 L1121.5,578 L1122,578 L1122.5,579 L1123,579 L1123.5,578 L1123.5,577 L1124,578 L1124.5,578 L1124.5,579 L1125,579 L1125,578 L1125.5,579 L1125.5,578" fill="none" stroke="#ff0000" stroke-width="1"/>
<line x1="105.5" y1="162" x2="105.5" y2="588" stroke="#000"/>
<line x1="110.5" y1="162" x2="110.5" y2="588" stroke="#000"/>
<line x1="202.5" y1="162" x2="202.5" y2="588" stroke="#000"/>
<line x1="299.5" y1="162" x2="299.5" y2="588" stroke="#000"/>
<line x1="387.5" y1="162" x2="387.5" y2="588" stroke="#000"/>
<line x1="501.5" y1="162" x2="501.5" y2="588" stroke="#000"/>
<line x1="612.5" y1="162" x2="612.5" y2="588" stroke="#000"/>
<line x1="617.5" y1="162" x2="617.5" y2="588" stroke="#000"/>
<line x1="648.5" y1="162" x2="648.5" y2="588" stroke="#000"/>
<line x1="1005.5" y1="162" x2="1005.5" y2="588" stroke="#000"/>
<rect x="986.5" y="164.5" width="38" height="22" fill="#fff" stroke="#000"/>
<text x="1005.5" y="172" text-anchor="middle" font-size="9">Cr#26</text>
<text x="1005.5" y="182" text-anchor="middle" font-size="9">267.719</text>
<rect x="629.5" y="164.5" width="38" height="22" fill="#fff" stroke="#000"/>
<text x="648.5" y="172" text-anchor="middle" font-size="9">Mn</text>
<text x="648.5" y="182" text-anchor="middle" font-size="9">260.568</text>
<rect x="591.5" y="164.5" width="42" height="22" fill="#fff" stroke="#000"/>
<text x="612.5" y="172" text-anchor="middle" font-size="9">Fe#3</text>
<text x="612.5" y="182" text-anchor="middle" font-size="9">259.8324</text>
<rect x="480.5" y="164.5" width="42" height="22" fill="#fff" stroke="#000"/>
<text x="501.5" y="172" text-anchor="middle" font-size="9">Mn#21</text>
<text x="501.5" y="182" text-anchor="middle" font-size="9">257.6103</text>
<rect x="371.5" y="164.5" width="32" height="22" fill="#fff" stroke="#000"/>
<text x="387.5" y="172" text-anchor="middle" font-size="9">P#4</text>
<text x="387.5" y="182" text-anchor="middle" font-size="9">255.32</text>
<rect x="278.5" y="164.5" width="42" height="22" fill="#fff" stroke="#000"/>
<text x="299.5" y="172" text-anchor="middle" font-size="9">P#6</text>
<text x="299.5" y="182" text-anchor="middle" font-size="9">253.5606</text>
<rect x="181.5" y="164.5" width="42" height="22" fill="#fff" stroke="#000"/>
<text x="202.5" y="172" text-anchor="middle" font-size="9">Si#5</text>
<text x="202.5" y="182" text-anchor="middle" font-size="9">251.6112</text>
<rect x="89.5" y="164.5" width="42" height="22" fill="#fff" stroke="#000"/>
<text x="110.5" y="172" text-anchor="middle" font-size="9">B</text>
<text x="110.5" y="182" text-anchor="middle" font-size="9">249.7722</text>
<rect x="84.5" y="164.5" width="42" height="22" fill="#fff" stroke="#000"/>
<text x="105.5" y="172" text-anchor="middle" font-size="9">B#3</text>
<text x="105.5" y="182" text-anchor="middle" font-size="9">249.6769</text>
<text x="638" y="618" text-anchor="middle" font-weight="bold" font-size="10.3">Pixel</text>
<text transform="translate(20,375) rotate(-90)" text-anchor="middle" font-size="11">Intensity (10^6)</text>
</svg>
<svg class="a" style="left:1252px;top:152px" width="17" height="478" viewBox="0 0 17 478"><path d="M4.5 11.5L8.7 6L13 11.5Z" fill="#a3a3a3"/><path d="M4.7 467.3L9 473L13.2 467.3Z" fill="#a3a3a3"/></svg>
<div class="a" style="left:1px;top:630px;width:1268px;height:1px;background:#fcfcfc"></div>
<svg class="a" style="left:1px;top:630px" width="1268" height="17" viewBox="0 0 1268 17"><path d="M11 5L5 9L11 13Z" fill="#a3a3a3"/><path d="M1257 5L1263 9L1257 13Z" fill="#a3a3a3"/></svg>
<div class="btn" style="left:1270px;top:154px;width:81px;height:27px"></div>
<div class="btn" style="left:1355px;top:154px;width:83px;height:27px"></div>
<svg class="a" style="left:1300px;top:158px" width="110" height="20" viewBox="1300 158 110 20" stroke="#000" stroke-width="1.7" fill="none"><path d="M1303 167.3H1317M1310 160.3V174.3M1389 167.3H1403"/></svg>
<div class="a" style="left:1269px;top:191px;width:170px;height:60px;border:1px solid #dcdcdc;border-bottom:0;border-right:0;border-radius:3px 0 0 0"></div>
<div class="a" style="left:1275px;top:184px;width:146px;height:14px;background:#f0f0f0"></div>
<div class="t " style="left:1278.6px;top:184px;font-size:13.4px"><span style="letter-spacing:-0.005px;margin-right:0.005px">background subtraction</span></div>
<div class="a" style="left:1270px;top:200px;width:83px;height:27px;background:#b0b0b0"></div>
<div class="a" style="left:1355px;top:200px;width:83px;height:27px;background:#b0b0b0"></div>
<div class="t w" style="left:1277.7px;top:204.7px;"><span style="letter-spacing:0.135px;margin-right:-0.135px">Deduction</span></div>
<div class="t w" style="left:1362.6px;top:204.7px;"><span style="letter-spacing:0.148px;margin-right:-0.148px">Deducting</span></div>
<div class="a" style="left:1270px;top:229px;width:168px;height:27px;background:#b0b0b0"></div>
<div class="t w" style="left:1314.7px;top:235px;"><span style="letter-spacing:0.253px;margin-right:-0.253px">Deduct blank</span></div>
<div class="a" style="left:1269px;top:257px;width:170px;height:370px;background:#fff;border:1px solid #000"></div>
<div class="a" style="left:1270px;top:258px;width:168px;height:368px;border:1px solid rgba(0,0,0,.12);border-right:0;border-bottom:0"></div>
<div class="t " style="left:1275.5px;top:271.8px;"><span style="letter-spacing:-0.183px;margin-right:0.183px">Display</span></div>
<div class="t " style="left:1327.3px;top:263.2px;"><span style="letter-spacing:0.042px;margin-right:-0.042px">Spectrum</span></div>
<div class="t " style="left:1346.4px;top:279.6px;"><span style="letter-spacing:0.098px;margin-right:-0.098px">list</span></div>
<div class="a" style="left:1393px;top:259px;width:45px;height:40px;overflow:hidden"><div class="t" style="left:-3.3px;top:12.5px"><span style="letter-spacing:-0.051px;margin-right:0.051px">Intensity</span></div></div>
<div class="vl" style="left:1318px;top:259px;height:40px;background:#e4e4e4"></div>
<div class="vl" style="left:1389px;top:259px;height:40px;background:#e4e4e4"></div>
<div class="a" style="left:1271px;top:300px;width:167px;height:22px;background:#0078d7"></div>
<div class="hl" style="left:1271px;top:299px;width:167px"></div>
<div class="hl" style="left:1271px;top:322px;width:167px"></div>
<div class="hl" style="left:1271px;top:345px;width:167px"></div>
<div class="vl" style="left:1318px;top:299px;height:47px"></div>
<div class="vl" style="left:1389px;top:299px;height:47px"></div>
<svg class="a" style="left:1288px;top:304px" width="13" height="13" viewBox="0 0 13 13"><rect width="13" height="13" rx="3" fill="#0f62be"/><path d="M3.5 6.8L5.6 8.8L9.6 4.6" fill="none" stroke="#fff" stroke-width="1"/></svg>
<svg class="a" style="left:1288px;top:327px" width="13" height="13" viewBox="0 0 13 13"><rect width="13" height="13" rx="3" fill="#0a5fc0"/><path d="M3.5 6.8L5.6 8.8L9.6 4.6" fill="none" stroke="#fff" stroke-width="1"/></svg>
<div class="t w" style="left:1323.2px;top:303.3px;"><span style="letter-spacing:-0.666px;margin-right:0.666px">100_62</span></div>
<div class="t w" style="left:1393.7px;top:303.3px;"><span style="letter-spacing:-0.453px;margin-right:0.453px">6329...</span></div>
<div class="t " style="left:1322.5px;top:326.3px;color:#1a00ff"><span style="letter-spacing:-0.758px;margin-right:0.758px">900_5</span></div>
<div class="t " style="left:1393.7px;top:326.3px;color:#1a00ff"><span style="letter-spacing:-0.453px;margin-right:0.453px">6253...</span></div>
<div class="a" style="left:1px;top:647px;width:1438px;height:15px;background:#fff"></div>
<svg class="a" style="left:715px;top:653px" width="10" height="6" viewBox="0 0 10 6"><path d="M1 1H9L5 5Z" fill="#000"/></svg>
<div class="a" style="left:1px;top:662px;width:1438px;height:3px;background:#acacac"></div>
<div class="btn" style="left:3px;top:666px;width:50px;height:25px;padding-right:2px"><span style="letter-spacing:-0.263px;margin-right:0.263px">Select</span></div>
<div class="btn" style="left:57px;top:666px;width:53px;height:25px;padding-right:2px"><span style="letter-spacing:-0.101px;margin-right:0.101px">Delete</span></div>
<div class="btn" style="left:114px;top:666px;width:43px;height:25px;padding-right:2px"><span style="letter-spacing:-0.806px;margin-right:0.806px">Save</span></div>
<div class="btn" style="left:767px;top:666px;width:25px;height:25px;font-size:10.6px;padding:2px 1px 0 0">&lt;</div>
<div class="btn" style="left:796px;top:666px;width:25px;height:25px;font-size:10.6px;padding:2px 1px 0 0">&gt;</div>
<div class="a" style="left:2px;top:692px;width:1420px;height:134px;background:#fff"></div>
<div class="hl" style="left:2px;top:692px;width:1420px"></div>
<div class="vl" style="left:1px;top:692px;height:134px;background:#a8a8a8"></div>
<div class="t " style="left:28.075px;top:697.1px;"><span style="letter-spacing:0.234px;margin-right:-0.234px">Detector</span></div>
<div class="t " style="left:22.45px;top:714.1px;"><span style="letter-spacing:0.309px;margin-right:-0.309px">calibration</span></div>
<div class="t " style="left:139.85px;top:697.1px;"><span style="letter-spacing:-0.449px;margin-right:0.449px">Pixel</span></div>
<div class="t " style="left:123.35px;top:714.1px;"><span style="letter-spacing:0.356px;margin-right:-0.356px">correction</span></div>
<div class="t " style="left:223.4px;top:697.1px;"><span style="letter-spacing:0.219px;margin-right:-0.219px">Deduct</span></div>
<div class="t " style="left:228.275px;top:714.1px;"><span style="letter-spacing:0.285px;margin-right:-0.285px">blank</span></div>
<div class="t " style="left:321.5px;top:705.6px;"><span style="letter-spacing:-0.034px;margin-right:0.034px">Element</span></div>
<div class="t " style="left:437px;top:705.6px;"><span style="letter-spacing:-0.109px;margin-right:0.109px">No</span></div>
<div class="t " style="left:521px;top:705.6px;"><span style="letter-spacing:0.217px;margin-right:-0.217px">Wavelength</span></div>
<div class="t " style="left:621px;top:705.6px;"><span style="letter-spacing:0.342px;margin-right:-0.342px">Detector</span></div>
<div class="t " style="left:765.5px;top:705.6px;"><span style="letter-spacing:-0.574px;margin-right:0.574px">Pixel</span></div>
<div class="t " style="left:888.95px;top:705.6px;"><span style="letter-spacing:0.221px;margin-right:-0.221px">Enable bg</span></div>
<div class="t " style="left:990.5px;top:705.6px;"><span style="letter-spacing:0.247px;margin-right:-0.247px">Left bg</span></div>
<div class="t " style="left:1087.25px;top:705.6px;"><span style="letter-spacing:0.368px;margin-right:-0.368px">Right bg</span></div>
<div class="t " style="left:1186.75px;top:697.1px;"><span style="letter-spacing:0.232px;margin-right:-0.232px">Compute</span></div>
<div class="t " style="left:1197.5px;top:714.1px;"><span style="letter-spacing:-0.519px;margin-right:0.519px">Pixels</span></div>
<div class="t " style="left:1335.25px;top:697.1px;"><span style="letter-spacing:-0.449px;margin-right:0.449px">Pixel</span></div>
<div class="t " style="left:1307.5px;top:714.1px;"><span style="letter-spacing:0.234px;margin-right:-0.234px">compensation</span></div>
<div class="vl" style="left:102px;top:694px;height:39px;background:#e4e4e4"></div>
<div class="vl" style="left:202px;top:694px;height:39px;background:#e4e4e4"></div>
<div class="vl" style="left:303px;top:694px;height:39px;background:#e4e4e4"></div>
<div class="vl" style="left:403px;top:694px;height:39px;background:#e4e4e4"></div>
<div class="vl" style="left:504px;top:694px;height:39px;background:#e4e4e4"></div>
<div class="vl" style="left:604px;top:694px;height:39px;background:#e4e4e4"></div>
<div class="vl" style="left:706px;top:694px;height:39px;background:#e4e4e4"></div>
<div class="vl" style="left:736px;top:694px;height:39px;background:#e4e4e4"></div>
<div class="vl" style="left:837px;top:694px;height:39px;background:#e4e4e4"></div>
<div class="vl" style="left:867px;top:694px;height:39px;background:#e4e4e4"></div>
<div class="vl" style="left:969px;top:694px;height:39px;background:#e4e4e4"></div>
<div class="vl" style="left:1070px;top:694px;height:39px;background:#e4e4e4"></div>
<div class="vl" style="left:1172px;top:694px;height:39px;background:#e4e4e4"></div>
<div class="vl" style="left:1273px;top:694px;height:39px;background:#e4e4e4"></div>
<div class="vl" style="left:1296px;top:694px;height:39px;background:#e4e4e4"></div>
<div class="vl" style="left:1398px;top:694px;height:39px;background:#e4e4e4"></div>
<div class="a" style="left:2px;top:734px;width:1420px;height:22px;background:#0078d7"></div>
<div class="hl" style="left:2px;top:733px;width:1420px"></div>
<svg class="a" style="left:45px;top:738px" width="13" height="13" viewBox="0 0 13 13"><rect width="13" height="13" rx="3" fill="#0f62be"/><path d="M3.5 6.8L5.6 8.8L9.6 4.6" fill="none" stroke="#fff" stroke-width="1"/></svg>
<div class="ub" style="left:146px;top:738px"></div>
<div class="ub" style="left:246px;top:738px"></div>
<svg class="a" style="left:912px;top:738px" width="13" height="13" viewBox="0 0 13 13"><rect width="13" height="13" rx="3" fill="#0f62be"/><path d="M3.5 6.8L5.6 8.8L9.6 4.6" fill="none" stroke="#fff" stroke-width="1"/></svg>
<div class="c w" style="left:302px;top:735px;width:100px;height:22px">B</div>
<div class="c w" style="left:402px;top:735px;width:101px;height:22px">3</div>
<div class="c w" style="left:503px;top:735px;width:100px;height:22px">249.6769</div>
<div class="c w" style="left:603px;top:735px;width:102px;height:22px">3</div>
<div class="c w" style="left:735px;top:735px;width:101px;height:22px">203</div>
<div class="c w" style="left:968px;top:735px;width:101px;height:22px">161</div>
<div class="c w" style="left:1069px;top:735px;width:102px;height:22px">276</div>
<div class="c w" style="left:1171px;top:735px;width:101px;height:22px">203</div>
<div class="c w" style="left:1295px;top:735px;width:102px;height:22px">0</div>
<div class="btn" style="left:708px;top:735px;width:27px;height:20px;font-size:10.2px;color:#000;padding:2px 2px 0 0">&lt;</div>
<div class="btn" style="left:839px;top:735px;width:27px;height:20px;font-size:10.2px;color:#000;padding:2px 2px 0 0">&gt;</div>
<div class="btn" style="left:1275px;top:735px;width:20px;height:20px;font-size:10.2px;color:#000;padding:2px 2px 0 0">&lt;</div>
<div class="btn" style="left:1400px;top:735px;width:20px;height:20px;font-size:10.2px;color:#000;padding:2px 2px 0 0">&gt;</div>
<div class="hl" style="left:2px;top:756px;width:1420px"></div>
<svg class="a" style="left:45px;top:761px" width="13" height="13" viewBox="0 0 13 13"><rect width="13" height="13" rx="3" fill="#0a5fc0"/><path d="M3.5 6.8L5.6 8.8L9.6 4.6" fill="none" stroke="#fff" stroke-width="1"/></svg>
<div class="ub" style="left:146px;top:761px"></div>
<div class="ub" style="left:246px;top:761px"></div>
<svg class="a" style="left:912px;top:761px" width="13" height="13" viewBox="0 0 13 13"><rect width="13" height="13" rx="3" fill="#0a5fc0"/><path d="M3.5 6.8L5.6 8.8L9.6 4.6" fill="none" stroke="#fff" stroke-width="1"/></svg>
<div class="c" style="left:302px;top:758px;width:100px;height:22px">B</div>
<div class="c" style="left:402px;top:758px;width:101px;height:22px"></div>
<div class="c" style="left:503px;top:758px;width:100px;height:22px">249.7722</div>
<div class="c" style="left:603px;top:758px;width:102px;height:22px">3</div>
<div class="c" style="left:735px;top:758px;width:101px;height:22px">219</div>
<div class="c" style="left:968px;top:758px;width:101px;height:22px">181</div>
<div class="c" style="left:1069px;top:758px;width:102px;height:22px">254</div>
<div class="c" style="left:1171px;top:758px;width:101px;height:22px">219</div>
<div class="c" style="left:1295px;top:758px;width:102px;height:22px">0</div>
<div class="btn" style="left:708px;top:758px;width:27px;height:20px;font-size:10.2px;color:#000;padding:2px 2px 0 0">&lt;</div>
<div class="btn" style="left:839px;top:758px;width:27px;height:20px;font-size:10.2px;color:#000;padding:2px 2px 0 0">&gt;</div>
<div class="btn" style="left:1275px;top:758px;width:20px;height:20px;font-size:10.2px;color:#000;padding:2px 2px 0 0">&lt;</div>
<div class="btn" style="left:1400px;top:758px;width:20px;height:20px;font-size:10.2px;color:#000;padding:2px 2px 0 0">&gt;</div>
<div class="hl" style="left:2px;top:779px;width:1420px"></div>
<svg class="a" style="left:45px;top:784px" width="13" height="13" viewBox="0 0 13 13"><rect width="13" height="13" rx="3" fill="#0a5fc0"/><path d="M3.5 6.8L5.6 8.8L9.6 4.6" fill="none" stroke="#fff" stroke-width="1"/></svg>
<div class="ub" style="left:146px;top:784px"></div>
<div class="ub" style="left:246px;top:784px"></div>
<svg class="a" style="left:912px;top:784px" width="13" height="13" viewBox="0 0 13 13"><rect width="13" height="13" rx="3" fill="#0a5fc0"/><path d="M3.5 6.8L5.6 8.8L9.6 4.6" fill="none" stroke="#fff" stroke-width="1"/></svg>
<div class="c" style="left:302px;top:781px;width:100px;height:22px">Si</div>
<div class="c" style="left:402px;top:781px;width:101px;height:22px">5</div>
<div class="c" style="left:503px;top:781px;width:100px;height:22px">251.6112</div>
<div class="c" style="left:603px;top:781px;width:102px;height:22px">3</div>
<div class="c" style="left:735px;top:781px;width:101px;height:22px">528</div>
<div class="c" style="left:968px;top:781px;width:101px;height:22px">553</div>
<div class="c" style="left:1069px;top:781px;width:102px;height:22px">558</div>
<div class="c" style="left:1171px;top:781px;width:101px;height:22px">529</div>
<div class="c" style="left:1295px;top:781px;width:102px;height:22px">0</div>
<div class="btn" style="left:708px;top:781px;width:27px;height:20px;font-size:10.2px;color:#000;padding:2px 2px 0 0">&lt;</div>
<div class="btn" style="left:839px;top:781px;width:27px;height:20px;font-size:10.2px;color:#000;padding:2px 2px 0 0">&gt;</div>
<div class="btn" style="left:1275px;top:781px;width:20px;height:20px;font-size:10.2px;color:#000;padding:2px 2px 0 0">&lt;</div>
<div class="btn" style="left:1400px;top:781px;width:20px;height:20px;font-size:10.2px;color:#000;padding:2px 2px 0 0">&gt;</div>
<div class="hl" style="left:2px;top:802px;width:1420px"></div>
<svg class="a" style="left:45px;top:807px" width="13" height="13" viewBox="0 0 13 13"><rect width="13" height="13" rx="3" fill="#0a5fc0"/><path d="M3.5 6.8L5.6 8.8L9.6 4.6" fill="none" stroke="#fff" stroke-width="1"/></svg>
<div class="ub" style="left:146px;top:807px"></div>
<div class="ub" style="left:246px;top:807px"></div>
<svg class="a" style="left:912px;top:807px" width="13" height="13" viewBox="0 0 13 13"><rect width="13" height="13" rx="3" fill="#0a5fc0"/><path d="M3.5 6.8L5.6 8.8L9.6 4.6" fill="none" stroke="#fff" stroke-width="1"/></svg>
<div class="c" style="left:302px;top:804px;width:100px;height:22px">P</div>
<div class="c" style="left:402px;top:804px;width:101px;height:22px">6</div>
<div class="c" style="left:503px;top:804px;width:100px;height:22px">253.5606</div>
<div class="c" style="left:603px;top:804px;width:102px;height:22px">3</div>
<div class="c" style="left:735px;top:804px;width:101px;height:22px">857</div>
<div class="c" style="left:968px;top:804px;width:101px;height:22px">809</div>
<div class="c" style="left:1069px;top:804px;width:102px;height:22px">896</div>
<div class="c" style="left:1171px;top:804px;width:101px;height:22px">857</div>
<div class="c" style="left:1295px;top:804px;width:102px;height:22px">0</div>
<div class="btn" style="left:708px;top:804px;width:27px;height:20px;font-size:10.2px;color:#000;padding:2px 2px 0 0">&lt;</div>
<div class="btn" style="left:839px;top:804px;width:27px;height:20px;font-size:10.2px;color:#000;padding:2px 2px 0 0">&gt;</div>
<div class="btn" style="left:1275px;top:804px;width:20px;height:20px;font-size:10.2px;color:#000;padding:2px 2px 0 0">&lt;</div>
<div class="btn" style="left:1400px;top:804px;width:20px;height:20px;font-size:10.2px;color:#000;padding:2px 2px 0 0">&gt;</div>
<div class="hl" style="left:2px;top:825px;width:1420px"></div>
<div class="vl" style="left:102px;top:733px;height:93px"></div>
<div class="vl" style="left:202px;top:733px;height:93px"></div>
<div class="vl" style="left:303px;top:733px;height:93px"></div>
<div class="vl" style="left:403px;top:733px;height:93px"></div>
<div class="vl" style="left:504px;top:733px;height:93px"></div>
<div class="vl" style="left:604px;top:733px;height:93px"></div>
<div class="vl" style="left:706px;top:733px;height:93px"></div>
<div class="vl" style="left:736px;top:733px;height:93px"></div>
<div class="vl" style="left:837px;top:733px;height:93px"></div>
<div class="vl" style="left:867px;top:733px;height:93px"></div>
<div class="vl" style="left:969px;top:733px;height:93px"></div>
<div class="vl" style="left:1070px;top:733px;height:93px"></div>
<div class="vl" style="left:1172px;top:733px;height:93px"></div>
<div class="vl" style="left:1273px;top:733px;height:93px"></div>
<div class="vl" style="left:1296px;top:733px;height:93px"></div>
<div class="vl" style="left:1398px;top:733px;height:93px"></div>
<div class="vl" style="left:1421px;top:733px;height:93px"></div>
<div class="a" style="left:1430px;top:709px;width:2px;height:39px;background:#858585;border-radius:1px"></div>
<div class="a" style="left:0;top:826px;width:1440px;height:25px;background:#f0f0f0"></div>
<div class="t " style="left:4.5px;top:831.8px;"><span style="letter-spacing:0.329px;margin-right:-0.329px">administrator</span></div>
<div class="t " style="left:101.25px;top:831.8px;"><span style="letter-spacing:-0.121px;margin-right:0.121px">Curve:<span style="font-size:12px">润滑油</span>-<span style="font-size:12px">副本</span></span></div>
<div class="t " style="left:221.25px;top:831.8px;"><span style="letter-spacing:0.210px;margin-right:-0.210px">Last standardized date:1/1/0001 12:00:00 AM</span></div>
<div class="t " style="left:504.5px;top:831.8px;"><span style="letter-spacing:0.149px;margin-right:-0.149px">Temperature: 34.8 ℃</span></div>
<div class="t " style="left:649.6px;top:831.8px;"><span style="letter-spacing:-0.075px;margin-right:0.075px">Excite count:184</span></div>
<div class="t " style="left:763px;top:831.8px;"><span style="letter-spacing:-0.088px;margin-right:0.088px">ID: 1626066872</span></div>
<div class="t " style="left:862.7px;top:831.8px;"><span style="letter-spacing:0.087px;margin-right:-0.087px"><span style="font-size:12px">授权截至</span>: 2025-11-17</span></div>
<div class="a" style="left:90.75px;top:834px;width:1px;height:12px;background:#111"></div>
<div class="a" style="left:211.25px;top:834px;width:1px;height:12px;background:#111"></div>
<div class="a" style="left:493.75px;top:834px;width:1px;height:12px;background:#111"></div>
<div class="a" style="left:638.75px;top:834px;width:1px;height:12px;background:#111"></div>
<div class="a" style="left:750.5px;top:834px;width:1px;height:12px;background:#111"></div>
<div class="a" style="left:1017.5px;top:834px;width:1px;height:12px;background:#111"></div>
<div class="a" style="left:1052.3px;top:834px;width:1px;height:12px;background:#111"></div>
<div class="a" style="left:992.3px;top:830px;width:18px;height:19px;background:#fff"></div>
<div class="a" style="left:993px;top:831.5px;width:16.6px;height:16.6px;border-radius:50%;background:#22ac38"></div>
<div class="a" style="left:1027px;top:830px;width:18px;height:19px;background:#fff"></div>
<div class="a" style="left:1027.7px;top:831.5px;width:16.6px;height:16.6px;border-radius:50%;background:#22ac38"></div>
<div class="a" style="left:1062px;top:830px;width:18px;height:19px;background:#fff"></div>
<div class="a" style="left:1062.7px;top:831.5px;width:16.6px;height:16.6px;border-radius:50%;background:#22ac38"></div>
<div class="a" style="left:0;top:851px;width:1440px;height:1px;background:#f4f4f4"></div>
<div class="a" style="left:0;top:852px;width:1440px;height:1px;background:#a9aec2"></div>
<div class="a" style="left:0;top:24px;width:1px;height:802px;background:#a8a8a8"></div>
<div class="a" style="left:1439px;top:24px;width:1px;height:827px;background:#a8a8a8"></div>
</body></html>
